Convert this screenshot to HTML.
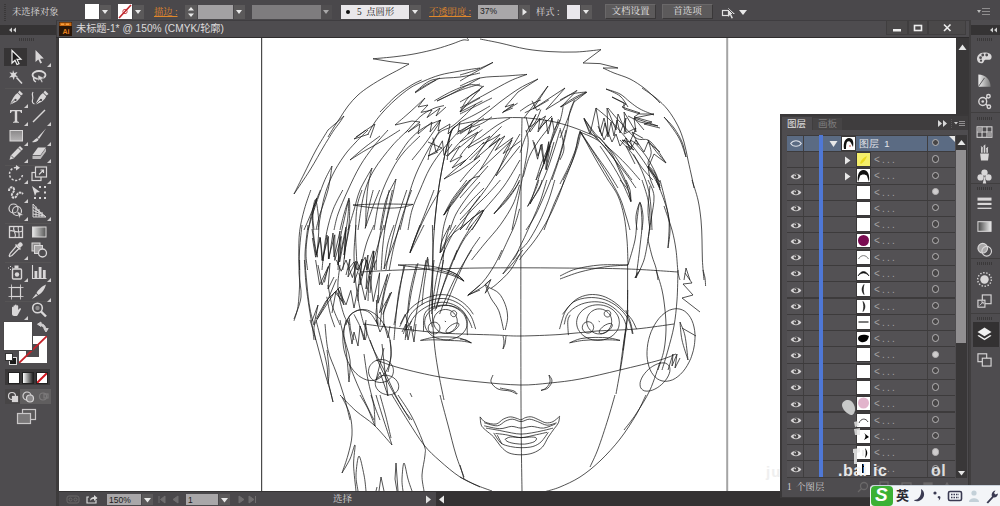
<!DOCTYPE html>
<html><head><meta charset="utf-8">
<style>
html,body{margin:0;padding:0;}
body{width:1000px;height:506px;overflow:hidden;background:#4b494c;position:relative;font-family:"Liberation Serif","Noto Serif CJK SC",serif;font-size:12px;color:#d8d6d7;}
.a{position:absolute;}
.t{position:absolute;white-space:nowrap;line-height:14px;height:14px;}
.sans{font-family:"Liberation Sans","Noto Sans CJK SC",sans-serif;}
.f{position:absolute;top:5px;height:14px;}
.dd{position:absolute;top:5px;height:14px;width:11px;background:#5b595a;}
.dd:after{content:"";position:absolute;left:2px;top:5px;border:3.5px solid transparent;border-top:4px solid #e8e8e8;border-bottom:none;}
.btn{position:absolute;top:4px;height:15px;background:#5c5a5b;border:1px solid #6a6869;border-bottom-color:#3a3839;border-right-color:#3a3839;box-sizing:border-box;text-align:center;line-height:13px;font-size:9.5px;color:#e2e0e1;}
.or{color:#e0882c;text-decoration:underline;}
.row{position:absolute;left:787px;width:168px;height:15.3px;background:#535154;}
.row i{position:absolute;top:0;height:100%;width:1px;background:#403e3f;}
.th{position:absolute;left:70px;top:1px;width:13px;height:13px;background:#fff;overflow:hidden;box-shadow:0 0 0 1px #3a3839;}
.nm{position:absolute;left:87px;top:0;font-size:10px;line-height:15px;color:#a3a1a2;letter-spacing:2.2px;font-family:"Liberation Sans",sans-serif;}
.tg{position:absolute;left:144.8px;top:3.3px;width:5.4px;height:5.4px;border:1.6px solid #b6b4b5;border-radius:50%;background:#474546;}
.tg.on{background:#cfcdce;}
</style></head><body>

<div class="a" style="left:0;top:0;width:1000px;height:25px;background:#4a484b;"></div>
<div class="a" style="left:4px;top:4px;width:2px;height:17px;background:repeating-linear-gradient(#3a3839 0 1px,#4a484b 1px 2px);"></div>
<div class="t" style="left:12px;top:5px;font-size:9.3px;color:#dddbdc;">未选择对象</div>
<div class="f" style="left:85px;width:14px;background:#fff;top:4px;height:15px;"></div><div class="dd" style="left:100px;"></div>
<div class="f" style="left:118px;width:14px;background:#fff;top:4px;height:15px;overflow:hidden;"><svg width="14" height="15" style="display:block"><line x1="1" y1="14" x2="13" y2="1" stroke="#c0262c" stroke-width="1.6"/><circle cx="7" cy="7.5" r="2.2" fill="none" stroke="#c0262c" stroke-width="0.8"/></svg></div><div class="dd" style="left:133px;"></div>
<div class="t or" style="left:154px;top:5px;font-size:9.3px;">描边 :</div>
<div class="f" style="left:185px;width:12px;background:#5b595a;"><svg width="12" height="14" style="display:block"><path d="M3 5.5 L6 2 L9 5.5Z M3 8.5 L6 12 L9 8.5Z" fill="#e8e8e8"/></svg></div>
<div class="f" style="left:198px;width:35px;background:#a3a1a3;"></div><div class="dd" style="left:234px;"></div>
<div class="f" style="left:252px;width:69px;background:#7e7c7e;"></div><div class="dd" style="left:321px;background:#555354;opacity:.6"></div>
<div class="f" style="left:341px;width:68px;background:#e9e7ea;"></div><div class="dd" style="left:410px;"></div>
<div class="a" style="left:346px;top:10px;width:4px;height:4px;border-radius:50%;background:#111;"></div>
<div class="t" style="left:357px;top:5px;font-size:9.3px;color:#222;">5 &nbsp;点圆形</div>
<div class="t or" style="left:429px;top:5px;font-size:9.3px;">不透明度 :</div>
<div class="f" style="left:478px;width:40px;background:#a9a7a9;"></div>
<div class="t sans" style="left:480px;top:4px;font-size:8.5px;color:#222;">37%</div>
<div class="f" style="left:519px;width:11px;background:#5b595a;"><svg width="11" height="14" style="display:block"><path d="M3.5 3.5 L8 7 L3.5 10.5Z" fill="#e8e8e8"/></svg></div>
<div class="t" style="left:536px;top:5px;font-size:9.3px;color:#dddbdc;">样式 :</div>
<div class="f" style="left:567px;width:13px;background:#e9e7ec;top:5px;height:14px;"></div><div class="dd" style="left:581px;"></div>
<div class="btn" style="left:605px;width:51px;">文档设置</div>
<div class="btn" style="left:662px;width:51px;">首选项</div>
<svg class="a" style="left:720px;top:4px" width="32" height="16"><rect x="2.5" y="6.5" width="6" height="5" fill="none" stroke="#e0e0e0" stroke-width="1.2"/><path d="M8 4 L15 10 L11 10 L13 14 L11.5 14.5 L10 11 L8 13Z" fill="#e0e0e0"/><path d="M6 3 L16 13" stroke="#4a484b" stroke-width="1"/><path d="M19 6 L27 6 L23 11Z" fill="#e8e8e8"/></svg>
<svg class="a" style="left:976px;top:7px" width="16" height="10"><path d="M1 3 L5 3 L3 6Z" fill="#bbb"/><path d="M6 1.5H14M6 4.5H14M6 7.5H14" stroke="#8f8d8e" stroke-width="1"/></svg>
<div class="a" style="left:0;top:25px;width:56px;height:10px;background:#353334;"></div>
<div class="a" style="left:56px;top:20px;width:914px;height:18px;background:#4e4c4f;border-top:1.5px solid #3f3d40;border-left:1px solid #3b393a;box-sizing:border-box;"></div>
<div class="a" style="left:56px;top:37px;width:914px;height:1px;background:#2e2c2d;"></div>
<svg class="a" style="left:8px;top:27px" width="10" height="6"><path d="M4 0.5 L1 3 L4 5.5Z M8 0.5 L5 3 L8 5.5Z" fill="#d0d0d0"/></svg>
<svg class="a" style="left:59px;top:22px" width="13" height="14"><rect x="0" y="0" width="13" height="14" fill="#2a1608"/><rect x="0.5" y="0.5" width="12" height="3.5" fill="#c96a14"/><rect x="2" y="1.5" width="3" height="1.5" fill="#f7a040"/><rect x="7" y="1.5" width="3" height="1.5" fill="#f7a040"/><text x="3.5" y="11.5" font-family="Liberation Sans,sans-serif" font-size="7" font-weight="bold" fill="#e8801c">Ai</text></svg>
<div class="t sans" style="left:76px;top:22px;font-size:10.2px;color:#dcdadb;">未标题-1* @ 150% (CMYK/轮廓)</div>
<svg class="a" style="left:886px;top:20px" width="82" height="16"><rect x="0.5" y="0.5" width="21" height="14" fill="#4a4849" stroke="#403e3f"/><rect x="22.5" y="0.5" width="19" height="14" fill="#4a4849" stroke="#403e3f"/><rect x="42.5" y="0.5" width="37" height="14" fill="#4a4849" stroke="#403e3f"/><rect x="7" y="9" width="8" height="2.5" fill="#eee"/><rect x="28.5" y="5.5" width="7" height="5" fill="none" stroke="#eee" stroke-width="1.6"/><path d="M58 4.5 L64.5 11 M64.5 4.5 L58 11" stroke="#eee" stroke-width="1.6"/></svg>
<div class="a" style="left:59px;top:38px;width:897px;height:453px;background:#fff;"></div>
<div class="a" style="left:0;top:35px;width:56px;height:471px;background:#4e4c4f;"></div>
<div class="a" style="left:56px;top:38px;width:3px;height:468px;background:#3d3b3c;"></div>
<div class="a" style="left:19px;top:38px;width:16px;height:3px;background:repeating-linear-gradient(90deg,#3a3839 0 1px,#4e4c4f 1px 2px);"></div>
<div class="a" style="left:4px;top:48px;width:23px;height:18px;background:#363435;"></div>
<div class="a" style="left:5px;top:87.5px;width:46px;height:1px;background:#565455;"></div>
<div class="a" style="left:5px;top:165px;width:46px;height:1px;background:#565455;"></div>
<div class="a" style="left:5px;top:222.5px;width:46px;height:1px;background:#565455;"></div>
<div class="a" style="left:5px;top:262px;width:46px;height:1px;background:#565455;"></div>
<div class="a" style="left:5px;top:301px;width:46px;height:1px;background:#565455;"></div>
<svg class="a" style="left:6.0px;top:47.0px" width="20" height="20" viewBox="0 0 20 20"><path d="M6 3.5 L6 16 L9 13.2 L11 17.5 L13 16.6 L11 12.4 L15 12.2Z" fill="#1c1a1b" stroke="#f0f0f0" stroke-width="1.2"/></svg>
<svg class="a" style="left:29.0px;top:47.0px" width="20" height="20" viewBox="0 0 20 20"><path d="M6.5 3 L6.5 15 L9.3 12.5 L11.3 16.5 L13 15.7 L11 11.8 L14.8 11.6Z" fill="#d9d7d8"/></svg>
<svg class="a" style="left:47.0px;top:63.0px" width="4" height="4"><path d="M4 0 V4 H0Z" fill="#cfcdce"/></svg>
<svg class="a" style="left:6.0px;top:67.0px" width="20" height="20" viewBox="0 0 20 20"><path d="M7 3 L8.2 6 L11.5 5 L9.6 7.8 L12 10 L8.7 9.8 L7.8 13 L6.4 10 L3 10.5 L5.5 8 L3.5 5.2 L6.5 6Z" fill="#d9d7d8"/><path d="M10.5 10.5 L16 16.5" stroke="#d9d7d8" stroke-width="1.6"/></svg>
<svg class="a" style="left:29.0px;top:67.0px" width="20" height="20" viewBox="0 0 20 20"><ellipse cx="10" cy="8" rx="6.5" ry="4" fill="none" stroke="#d9d7d8" stroke-width="1.8"/><path d="M5 10 C4 12 5 14 7 15" fill="none" stroke="#d9d7d8" stroke-width="1.3"/><path d="M9 8 L15 11 L12.5 12 L14 15 L12.5 15.5 L11 12.5 L9 14Z" fill="#d9d7d8" stroke="#4e4c4f" stroke-width="0.5"/></svg>
<svg class="a" style="left:6.0px;top:88.0px" width="20" height="20" viewBox="0 0 20 20"><path d="M13.5 2.5 L17 6 L15 7.5 L12 4.5Z" fill="#d9d7d8"/><path d="M11.5 5 L14.7 8.2 C13.5 11.5 10 14.5 4 16.5 C6 11 8.5 7 11.5 5Z M9.5 10.8 A1.1 1.1 0 1 0 9.51 10.8Z" fill="#d9d7d8" fill-rule="evenodd"/><path d="M4 16.5 L9 11.5" stroke="#4e4c4f" stroke-width="0.8"/></svg>
<svg class="a" style="left:24.0px;top:104.0px" width="4" height="4"><path d="M4 0 V4 H0Z" fill="#cfcdce"/></svg>
<svg class="a" style="left:29.0px;top:88.0px" width="20" height="20" viewBox="0 0 20 20"><g transform="translate(2.5,0)"><path d="M13.5 2.5 L17 6 L15 7.5 L12 4.5Z" fill="#d9d7d8"/><path d="M11.5 5 L14.7 8.2 C13.5 11.5 10 14.5 4 16.5 C6 11 8.5 7 11.5 5Z M9.5 10.8 A1.1 1.1 0 1 0 9.51 10.8Z" fill="#d9d7d8" fill-rule="evenodd"/><path d="M4 16.5 L9 11.5" stroke="#4e4c4f" stroke-width="0.8"/></g><path d="M4 4 C2 7 5 9 3.5 12 C3 14 4 15.5 5.5 16" fill="none" stroke="#d9d7d8" stroke-width="1.2"/></svg>
<svg class="a" style="left:6.0px;top:106.0px" width="20" height="20" viewBox="0 0 20 20"><path d="M4 4 H16 V7 H15 C14.8 5.6 14 5.2 12.5 5.2 H11.2 V14.5 C11.2 15.6 11.8 15.8 13 15.9 V16.8 H7 V15.9 C8.2 15.8 8.8 15.6 8.8 14.5 V5.2 H7.5 C6 5.2 5.2 5.6 5 7 H4Z" fill="#d9d7d8"/></svg>
<svg class="a" style="left:24.0px;top:122.0px" width="4" height="4"><path d="M4 0 V4 H0Z" fill="#cfcdce"/></svg>
<svg class="a" style="left:29.0px;top:106.0px" width="20" height="20" viewBox="0 0 20 20"><path d="M4 16 L16 4" stroke="#d9d7d8" stroke-width="1.5"/></svg>
<svg class="a" style="left:47.0px;top:122.0px" width="4" height="4"><path d="M4 0 V4 H0Z" fill="#cfcdce"/></svg>
<svg class="a" style="left:6.0px;top:125.5px" width="20" height="20" viewBox="0 0 20 20"><defs><linearGradient id="rg" x1="0" y1="0" x2="0" y2="1"><stop offset="0" stop-color="#8a8889"/><stop offset="1" stop-color="#b5b3b4"/></linearGradient></defs><rect x="4" y="4.5" width="12.5" height="10.5" fill="url(#rg)" stroke="#d9d7d8" stroke-width="1"/></svg>
<svg class="a" style="left:24.0px;top:141.5px" width="4" height="4"><path d="M4 0 V4 H0Z" fill="#cfcdce"/></svg>
<svg class="a" style="left:29.0px;top:125.5px" width="20" height="20" viewBox="0 0 20 20"><path d="M17 2.5 L8.5 11.5 L10 13Z" fill="#d9d7d8"/><path d="M8 12 L9.6 13.6 C8.5 16 5.5 16.5 3 16 C5 15 5.5 13 8 12Z" fill="#d9d7d8"/></svg>
<svg class="a" style="left:47.0px;top:141.5px" width="4" height="4"><path d="M4 0 V4 H0Z" fill="#cfcdce"/></svg>
<svg class="a" style="left:6.0px;top:143.0px" width="20" height="20" viewBox="0 0 20 20"><path d="M14 3 L17 6 L7.5 15.5 L3.5 16.8 L4.8 12.5Z" fill="#d9d7d8"/><path d="M12.3 4.8 L15.2 7.7" stroke="#4e4c4f" stroke-width="0.9"/><path d="M5 12.5 L7.5 15" stroke="#4e4c4f" stroke-width="0.9"/></svg>
<svg class="a" style="left:24.0px;top:159.0px" width="4" height="4"><path d="M4 0 V4 H0Z" fill="#cfcdce"/></svg>
<svg class="a" style="left:29.0px;top:143.0px" width="20" height="20" viewBox="0 0 20 20"><path d="M9 4.5 L17 4.5 L11.5 12 L3.5 12Z" fill="#d9d7d8"/><path d="M3.5 12.8 L11.5 12.8 L17 5.3 V8.5 L11.5 16 L3.5 16Z" fill="#bdbbbc"/></svg>
<svg class="a" style="left:47.0px;top:159.0px" width="4" height="4"><path d="M4 0 V4 H0Z" fill="#cfcdce"/></svg>
<svg class="a" style="left:6.0px;top:163.5px" width="20" height="20" viewBox="0 0 20 20"><path d="M10 3.5 A6.5 6.5 0 1 0 16.5 10" fill="none" stroke="#d9d7d8" stroke-width="1.5" stroke-dasharray="2.2 1.6"/><path d="M10 1 L14 3.8 L10 6.5Z" fill="#d9d7d8"/></svg>
<svg class="a" style="left:24.0px;top:179.5px" width="4" height="4"><path d="M4 0 V4 H0Z" fill="#cfcdce"/></svg>
<svg class="a" style="left:29.0px;top:163.5px" width="20" height="20" viewBox="0 0 20 20"><rect x="3" y="8.5" width="9" height="8" fill="none" stroke="#d9d7d8" stroke-width="1.2"/><rect x="6.5" y="3" width="11" height="10" fill="#4e4c4f" stroke="#d9d7d8" stroke-width="1.2"/><path d="M10 10.5 L14.5 6 M11.5 6 H14.5 V9" stroke="#d9d7d8" stroke-width="1.2" fill="none"/></svg>
<svg class="a" style="left:47.0px;top:179.5px" width="4" height="4"><path d="M4 0 V4 H0Z" fill="#cfcdce"/></svg>
<svg class="a" style="left:6.0px;top:182.5px" width="20" height="20" viewBox="0 0 20 20"><path d="M3 8 C3 4 7 3 8 6 C9 9 5 10 6 13 C7 16 10 15 11 12 C12 9 15 9 17 11" fill="none" stroke="#d9d7d8" stroke-width="2" stroke-dasharray="2.5 0.7"/></svg>
<svg class="a" style="left:24.0px;top:198.5px" width="4" height="4"><path d="M4 0 V4 H0Z" fill="#cfcdce"/></svg>
<svg class="a" style="left:29.0px;top:182.5px" width="20" height="20" viewBox="0 0 20 20"><path d="M3 3 L11 9 L7.5 9.5 L6 13Z" fill="#d9d7d8"/><g fill="#d9d7d8"><rect x="10" y="3" width="2" height="2"/><rect x="15" y="3" width="2" height="2"/><rect x="15" y="8.5" width="2" height="2"/><rect x="15" y="14" width="2" height="2"/><rect x="10" y="14" width="2" height="2"/><rect x="5" y="14" width="2" height="2"/></g></svg>
<svg class="a" style="left:6.0px;top:201.0px" width="20" height="20" viewBox="0 0 20 20"><circle cx="7.5" cy="7.5" r="4.5" fill="none" stroke="#d9d7d8" stroke-width="1.2"/><circle cx="11" cy="10" r="4.5" fill="none" stroke="#d9d7d8" stroke-width="1.2"/><path d="M10.5 9.5 L17.5 14 L14.5 14.6 L13.5 17.5Z" fill="#d9d7d8" stroke="#4e4c4f" stroke-width="0.5"/></svg>
<svg class="a" style="left:24.0px;top:217.0px" width="4" height="4"><path d="M4 0 V4 H0Z" fill="#cfcdce"/></svg>
<svg class="a" style="left:29.0px;top:201.0px" width="20" height="20" viewBox="0 0 20 20"><path d="M4 3 L4 16 L17 16 L10 10Z" fill="none" stroke="#d9d7d8" stroke-width="1"/><path d="M4 6 L12 12 M4 9.5 L14 13.7 M4 13 L16 15 M7 5.5 V16 M10 8 V16 M13 11 V16" stroke="#d9d7d8" stroke-width="1"/></svg>
<svg class="a" style="left:47.0px;top:217.0px" width="4" height="4"><path d="M4 0 V4 H0Z" fill="#cfcdce"/></svg>
<svg class="a" style="left:6.0px;top:221.5px" width="20" height="20" viewBox="0 0 20 20"><rect x="3.5" y="4.5" width="13" height="11" fill="none" stroke="#d9d7d8" stroke-width="1.3"/><path d="M3.5 9 C7 7 9 12 16.5 9 M8 4.5 C6 8 11 11 9 15.5 M12.5 4.5 C11 8 14 10 13 15.5" fill="none" stroke="#d9d7d8" stroke-width="1.1"/></svg>
<svg class="a" style="left:29.0px;top:221.5px" width="20" height="20" viewBox="0 0 20 20"><defs><linearGradient id="gg" x1="0" y1="0" x2="1" y2="0"><stop offset="0" stop-color="#e8e8e8"/><stop offset="1" stop-color="#555"/></linearGradient></defs><rect x="3.5" y="5" width="13.5" height="10" fill="url(#gg)" stroke="#d9d7d8" stroke-width="1"/></svg>
<svg class="a" style="left:6.0px;top:239.5px" width="20" height="20" viewBox="0 0 20 20"><path d="M13.5 2.5 C15 1.5 17.5 4 16.5 5.5 L14 8 L11 5Z" fill="#d9d7d8"/><path d="M10.5 6 L13 8.5 L6 15.5 L3.5 16.5 L3.2 15.8 L4.2 13.3Z" fill="none" stroke="#d9d7d8" stroke-width="1.2"/><path d="M9.5 4.5 L14.5 9.5" stroke="#d9d7d8" stroke-width="1.5"/></svg>
<svg class="a" style="left:24.0px;top:255.5px" width="4" height="4"><path d="M4 0 V4 H0Z" fill="#cfcdce"/></svg>
<svg class="a" style="left:29.0px;top:239.5px" width="20" height="20" viewBox="0 0 20 20"><rect x="3" y="3" width="8" height="8" fill="#8d8b8c" stroke="#d9d7d8" stroke-width="1"/><rect x="5.5" y="5.5" width="8" height="8" fill="#a5a3a4" stroke="#d9d7d8" stroke-width="1"/><circle cx="13.5" cy="13" r="4" fill="#4e4c4f" stroke="#d9d7d8" stroke-width="1.3"/></svg>
<svg class="a" style="left:6.0px;top:261.5px" width="20" height="20" viewBox="0 0 20 20"><rect x="6.5" y="7" width="9" height="10" rx="1" fill="none" stroke="#d9d7d8" stroke-width="1.4"/><circle cx="11" cy="12.5" r="2.2" fill="#d9d7d8"/><rect x="8.5" y="3.5" width="4" height="3" fill="#d9d7d8"/><path d="M2 6 h1 M4 4.5 h1 M4 7.5 h1 M6 6 h1" stroke="#d9d7d8" stroke-width="1"/></svg>
<svg class="a" style="left:24.0px;top:277.5px" width="4" height="4"><path d="M4 0 V4 H0Z" fill="#cfcdce"/></svg>
<svg class="a" style="left:29.0px;top:261.5px" width="20" height="20" viewBox="0 0 20 20"><path d="M3.5 3 V16.5 H17.5" fill="none" stroke="#d9d7d8" stroke-width="1.1"/><rect x="5.5" y="9" width="2.8" height="7" fill="#d9d7d8"/><rect x="9.7" y="5" width="2.8" height="11" fill="#d9d7d8"/><rect x="13.9" y="8" width="2.8" height="8" fill="#d9d7d8"/></svg>
<svg class="a" style="left:47.0px;top:277.5px" width="4" height="4"><path d="M4 0 V4 H0Z" fill="#cfcdce"/></svg>
<svg class="a" style="left:6.0px;top:281.5px" width="20" height="20" viewBox="0 0 20 20"><rect x="5.5" y="5.5" width="9" height="9" fill="none" stroke="#d9d7d8" stroke-width="1.2"/><path d="M2.5 5.5 H17.5 M2.5 14.5 H17.5 M5.5 2.5 V17.5 M14.5 2.5 V17.5" stroke="#d9d7d8" stroke-width="0.8"/></svg>
<svg class="a" style="left:29.0px;top:281.5px" width="20" height="20" viewBox="0 0 20 20"><path d="M17 2.5 C13 4 9 8 7.5 11 L9.5 13 C13 11 16 7 17 2.5Z" fill="#d9d7d8"/><path d="M7 11.8 L8.8 13.6 L3 17Z" fill="#d9d7d8"/></svg>
<svg class="a" style="left:47.0px;top:297.5px" width="4" height="4"><path d="M4 0 V4 H0Z" fill="#cfcdce"/></svg>
<svg class="a" style="left:6.0px;top:299.5px" width="20" height="20" viewBox="0 0 20 20"><path d="M5 9 V5.5 C5 4.5 6.5 4.5 6.5 5.5 V4 C6.5 3 8 3 8 4 V3.3 C8 2.3 9.6 2.3 9.6 3.3 V4 C9.6 3 11.2 3 11.2 4 V8 L12.5 6.5 C13.3 5.7 14.5 6.5 13.8 7.5 L11 12.5 C10.5 13.5 10 14 9 14 H7 C6 14 5 13 5 12Z" fill="#d9d7d8" transform="translate(1,2)"/></svg>
<svg class="a" style="left:24.0px;top:315.5px" width="4" height="4"><path d="M4 0 V4 H0Z" fill="#cfcdce"/></svg>
<svg class="a" style="left:29.0px;top:299.5px" width="20" height="20" viewBox="0 0 20 20"><circle cx="8.5" cy="8" r="4.8" fill="none" stroke="#d9d7d8" stroke-width="1.6"/><circle cx="8.5" cy="8" r="2.2" fill="#8d8b8c"/><path d="M12 11.5 L17 16.5" stroke="#d9d7d8" stroke-width="2.4"/></svg>
<div class="a" style="left:19px;top:336px;width:28px;height:27px;background:#fff;"></div>
<div class="a" style="left:26px;top:344px;width:13px;height:13px;background:#4e4c4f;"></div>
<svg class="a" style="left:19px;top:336px" width="28" height="27"><path d="M0 27 L28 0" stroke="#c4222a" stroke-width="1.8"/></svg>
<div class="a" style="left:4px;top:322px;width:28px;height:28px;background:#fff;box-shadow:0 0 0 1px #4a4849;"></div>
<svg class="a" style="left:36px;top:320px" width="14" height="14"><path d="M3 4 C7 3 10 6 10 10 M1.5 4.2 L5 2 V6.5Z M10 12 L7.8 8.5 H12.2Z" fill="#cfcdce" stroke="#cfcdce" stroke-width="1" /></svg>
<div class="a" style="left:9px;top:357px;width:6px;height:6px;background:#1a1a1a;border:1px solid #ddd;"></div><div class="a" style="left:5px;top:353px;width:6px;height:6px;background:#fff;border:1px solid #333;"></div>
<div class="a" style="left:5px;top:369px;width:45px;height:16px;background:#3a3839;"></div>
<div class="a" style="left:8px;top:372px;width:10px;height:10px;background:#fff;border:1px solid #222;"></div>
<div class="a" style="left:22px;top:372px;width:10px;height:10px;background:linear-gradient(90deg,#fff,#222);border:1px solid #222;"></div>
<div class="a" style="left:36px;top:372px;width:10px;height:10px;background:#fff;border:1px solid #222;overflow:hidden"><svg width="10" height="10" style="display:block"><path d="M0 10 L10 0" stroke="#d01820" stroke-width="2"/></svg></div>
<div class="a" style="left:5px;top:389px;width:46px;height:15px;background:#605e5f;"></div>
<div class="a" style="left:5px;top:389px;width:15px;height:15px;background:#474546;"></div>
<svg class="a" style="left:5px;top:389px" width="46" height="15"><g fill="none" stroke="#d6d4d5" stroke-width="1.2"><circle cx="7" cy="7" r="3.5"/><rect x="7.500" y="7.500" width="5" height="5" fill="#d6d4d5"/><circle cx="22" cy="7" r="4"/><circle cx="25" cy="9.500" r="3.500" fill="#8a8889"/></g><g fill="none" stroke="#7c7a7b" stroke-width="1.2"><circle cx="38" cy="7.500" r="3.500"/><rect x="39" y="5" width="4" height="4"/></g></svg>
<svg class="a" style="left:16px;top:408px" width="22" height="18"><rect x="6.500" y="1.500" width="13" height="10" fill="#5a5859" stroke="#c9c7c8" stroke-width="1.200"/><rect x="1.500" y="5.500" width="13" height="10" fill="#7a7879" stroke="#c9c7c8" stroke-width="1.200"/></svg>
<div class="a" style="left:956px;top:38px;width:13px;height:453px;background:#393738;"></div>
<svg class="a" style="left:956px;top:42px" width="13" height="10"><path d="M2.5 8 L6.5 2.5 L10.5 8Z" fill="#e6e6e6"/></svg>
<div class="a" style="left:969px;top:20px;width:31px;height:486px;background:#4e4c4f;"></div>
<div class="a" style="left:969px;top:20px;width:2px;height:486px;background:#403e3f;"></div>
<div class="a" style="left:971px;top:25px;width:29px;height:10px;background:#353334;"></div>
<svg class="a" style="left:989px;top:27px" width="10" height="6"><path d="M4 0.5 L1 3 L4 5.5Z M8 0.5 L5 3 L8 5.5Z" fill="#d0d0d0"/></svg>
<div class="a" style="left:977px;top:38px;width:15px;height:3px;background:repeating-linear-gradient(90deg,#3a3839 0 1px,#4e4c4f 1px 2px);"></div>
<div class="a" style="left:977px;top:117px;width:15px;height:3px;background:repeating-linear-gradient(90deg,#3a3839 0 1px,#4e4c4f 1px 2px);"></div>
<div class="a" style="left:977px;top:187px;width:15px;height:3px;background:repeating-linear-gradient(90deg,#3a3839 0 1px,#4e4c4f 1px 2px);"></div>
<div class="a" style="left:977px;top:262px;width:15px;height:3px;background:repeating-linear-gradient(90deg,#3a3839 0 1px,#4e4c4f 1px 2px);"></div>
<div class="a" style="left:977px;top:317px;width:15px;height:3px;background:repeating-linear-gradient(90deg,#3a3839 0 1px,#4e4c4f 1px 2px);"></div>
<div class="a" style="left:971px;top:112px;width:29px;height:1px;background:#403e3f;"></div>
<div class="a" style="left:971px;top:183px;width:29px;height:1px;background:#403e3f;"></div>
<div class="a" style="left:971px;top:258px;width:29px;height:1px;background:#403e3f;"></div>
<div class="a" style="left:971px;top:313px;width:29px;height:1px;background:#403e3f;"></div>
<svg class="a" style="left:974px;top:48px" width="21" height="21" viewBox="0 0 24 24"><path d="M12 5 C6 5 3 9 3.500 13 C4 17 8 18 10 17 C12 16 11 14 13 13.500 C15 13 19 15 20 11 C21 7 17 5 12 5Z" fill="#d9d7d8"/><circle cx="7.500" cy="11" r="1.600" fill="#4e4c4f"/><circle cx="10" cy="8" r="1.600" fill="#4e4c4f"/><circle cx="14.500" cy="8" r="1.600" fill="#4e4c4f"/><circle cx="8" cy="14.500" r="1.300" fill="#4e4c4f"/></svg>
<svg class="a" style="left:974px;top:70px" width="21" height="21" viewBox="0 0 24 24"><defs><linearGradient id="cg" x1="0" y1="0" x2="1" y2="0"><stop offset="0" stop-color="#f0f0f0"/><stop offset="1" stop-color="#777"/></linearGradient></defs><path d="M5 19 V5 C13 5 19 11 19 19Z" fill="url(#cg)"/><path d="M5 19 L12 9" stroke="#4e4c4f" stroke-width="1"/></svg>
<svg class="a" style="left:974px;top:91px" width="21" height="21" viewBox="0 0 24 24"><g fill="none" stroke="#d9d7d8" stroke-width="1.600"><circle cx="10" cy="12" r="4.500"/><circle cx="16.500" cy="6" r="2"/><circle cx="17" cy="18" r="2"/><path d="M13.500 9 L15 7.500 M13.500 15 L15.500 16.800"/></g><circle cx="10" cy="12" r="1.500" fill="#d9d7d8"/></svg>
<svg class="a" style="left:974px;top:122px" width="21" height="21" viewBox="0 0 24 24"><rect x="3.500" y="5.500" width="17" height="12" fill="none" stroke="#d9d7d8" stroke-width="1.200"/><path d="M3.500 11.500 H20.500 M9.200 5.500 V17.500 M14.800 5.500 V17.500" stroke="#d9d7d8" stroke-width="1.200"/><rect x="4" y="6" width="5" height="5" fill="#9a9899"/><rect x="15" y="12" width="5" height="5" fill="#9a9899"/></svg>
<svg class="a" style="left:974px;top:143px" width="21" height="21" viewBox="0 0 24 24"><path d="M7 12 H17 L16 20 H8Z" fill="#d9d7d8"/><path d="M9 11 V5 M12 11 V3 M15 11 V6" stroke="#d9d7d8" stroke-width="1.800"/><path d="M8 4 l2 2 M13 2 l-2 2 M16 5 l-2 2" stroke="#d9d7d8" stroke-width="1.200"/></svg>
<svg class="a" style="left:974px;top:166px" width="21" height="21" viewBox="0 0 24 24"><circle cx="12" cy="7.500" r="3.600" fill="#d9d7d8"/><circle cx="7.500" cy="13" r="3.600" fill="#d9d7d8"/><circle cx="16.500" cy="13" r="3.600" fill="#d9d7d8"/><path d="M12 11 L10 20 H14Z" fill="#d9d7d8"/></svg>
<svg class="a" style="left:974px;top:193px" width="21" height="21" viewBox="0 0 24 24"><path d="M4 7 H20" stroke="#d9d7d8" stroke-width="3.500"/><path d="M4 12.500 H20" stroke="#d9d7d8" stroke-width="2.500"/><path d="M4 17.500 H20" stroke="#d9d7d8" stroke-width="1.500"/></svg>
<svg class="a" style="left:974px;top:216px" width="21" height="21" viewBox="0 0 24 24"><defs><linearGradient id="g2" x1="0" y1="0" x2="1" y2="0"><stop offset="0" stop-color="#444"/><stop offset="1" stop-color="#eee"/></linearGradient></defs><rect x="4.500" y="6.500" width="15" height="11" fill="url(#g2)" stroke="#d9d7d8" stroke-width="1.200"/></svg>
<svg class="a" style="left:974px;top:239px" width="21" height="21" viewBox="0 0 24 24"><circle cx="10" cy="10.500" r="5.500" fill="#a9a7a8" stroke="#d9d7d8" stroke-width="1.300"/><circle cx="14.500" cy="14" r="5.500" fill="none" stroke="#d9d7d8" stroke-width="1.300"/></svg>
<svg class="a" style="left:974px;top:269px" width="21" height="21" viewBox="0 0 24 24"><circle cx="12" cy="12" r="4.800" fill="#d9d7d8"/><circle cx="12" cy="12" r="7.800" fill="none" stroke="#d9d7d8" stroke-width="1.600" stroke-dasharray="1.600 1.900"/></svg>
<svg class="a" style="left:974px;top:291px" width="21" height="21" viewBox="0 0 24 24"><rect x="9.500" y="4.500" width="10" height="10" fill="none" stroke="#d9d7d8" stroke-width="1.300"/><rect x="4.500" y="10.500" width="8" height="8" fill="#4e4c4f" stroke="#d9d7d8" stroke-width="1.300"/><path d="M6.500 16.500 L10.500 12.500 M8 12.500 H10.500 V15" stroke="#d9d7d8" stroke-width="1" fill="none"/></svg>
<div class="a" style="left:973px;top:322px;width:26px;height:25px;background:#333132;"></div>
<svg class="a" style="left:974px;top:324px" width="21" height="21" viewBox="0 0 24 24"><path d="M12 4 L20 9 L12 14 L4 9Z" fill="#f0f0f0"/><path d="M5.500 12.500 L12 16.500 L18.500 12.500 L20 13.500 L12 18.500 L4 13.500Z" fill="#f0f0f0"/></svg>
<svg class="a" style="left:974px;top:349px" width="21" height="21" viewBox="0 0 24 24"><rect x="4.500" y="5.500" width="10" height="9" fill="none" stroke="#d9d7d8" stroke-width="1.300"/><rect x="9.500" y="10.500" width="10" height="9" fill="#4e4c4f" stroke="#d9d7d8" stroke-width="1.300"/></svg>
<div class="a" style="left:59px;top:491px;width:910px;height:15px;background:#4a484b;"></div>
<div class="a" style="left:59px;top:491px;width:910px;height:1px;background:#353334;"></div>
<div class="a" style="left:436px;top:492px;width:533px;height:14px;background:#343233;"></div>
<div class="a" style="left:878px;top:493px;width:24px;height:13px;background:#8d8b8d;"></div>
<div class="a" style="left:107px;top:494px;width:34px;height:11px;background:#a9a7a9;"></div>
<div class="t sans" style="left:109px;top:493px;font-size:8.5px;color:#1c1c1c;">150%</div>
<div class="a" style="left:142px;top:494px;width:11px;height:11px;background:#5b595a;"></div><svg class="a" style="left:142px;top:494px" width="11" height="11"><path d="M2 4 L9 4 L5.5 8.5Z" fill="#e8e8e8"/></svg>
<div class="a" style="left:186px;top:494px;width:32px;height:11px;background:#a9a7a9;"></div>
<div class="t sans" style="left:188px;top:493px;font-size:8.5px;color:#1c1c1c;">1</div>
<div class="a" style="left:219px;top:494px;width:11px;height:11px;background:#5b595a;"></div><svg class="a" style="left:219px;top:494px" width="11" height="11"><path d="M2 4 L9 4 L5.5 8.5Z" fill="#e8e8e8"/></svg>
<svg class="a" style="left:59px;top:492px" width="400" height="14"><g fill="#6f6d6e"><path d="M100 4 V11 M101.5 7.5 L106 4 V11Z M114 7.5 L119 4 V11Z" stroke="#6f6d6e"/><path d="M180 4 L185 7.5 L180 11Z M190 4 L195 7.5 L190 11Z M196.5 4 V11" stroke="#6f6d6e"/></g><g stroke="#6a6869" fill="none"><rect x="8" y="4" width="12" height="7" rx="2"/><circle cx="11.5" cy="7.5" r="1.5"/><circle cx="16.5" cy="7.5" r="1.5"/></g><path d="M30 5 H28 V11 H37 V8" stroke="#d8d8d8" fill="none" stroke-width="1.2"/><path d="M31 9 C31 6 33 5 35 5 V3 L38.5 6 L35 9 V7 C33.5 7 32 7.5 31 9Z" fill="#d8d8d8"/><path d="M367 3.5 L372 7.5 L367 11.5Z" fill="#e0e0e0"/><path d="M385 3.5 L380 7.5 L385 11.5Z" fill="#e8e8e8"/></svg>
<div class="t" style="left:333px;top:492px;font-size:9.5px;color:#d8d6d7;">选择</div>
<div class="a" style="left:780px;top:114px;width:189px;height:384px;background:#3a3839;"></div>
<div class="a" style="left:782px;top:116px;width:186px;height:14px;background:#3f3d3e;"></div>
<div class="a" style="left:782px;top:117px;width:30px;height:14px;background:#4e4c4f;"></div>
<div class="a" style="left:813px;top:118px;width:29px;height:12px;background:#464445;"></div>
<div class="a" style="left:782px;top:130px;width:186px;height:367px;background:#4e4c4f;"></div>
<div class="t sans" style="left:787px;top:117px;font-size:9.5px;color:#e4e2e3;">图层</div>
<div class="t sans" style="left:818px;top:117px;font-size:9.5px;color:#7d7b7c;">画板</div>
<svg class="a" style="left:935px;top:118px" width="32" height="12"><path d="M3 2 L7 5.5 L3 9Z M8 2 L12 5.5 L8 9Z" fill="#d8d8d8"/><path d="M16.5 1 V10" stroke="#5a5859" stroke-dasharray="1 1"/><path d="M19 4 L23 4 L21 6.5Z" fill="#ccc"/><path d="M24 3.5H30M24 5.5H30M24 7.5H30" stroke="#8f8d8e" stroke-width="1"/></svg>
<div class="a" style="left:787px;top:135px;width:168px;height:343px;background:#3d3b3c;"></div>
<div class="row" style="top:135.7px;background:#5b6b83;"><i style="left:16px"></i><b class="a" style="left:32px;top:-1px;width:4px;height:17px;background:#4f78d6;"></b><i style="left:140px"></i><svg class="a" style="left:3px;top:3.5px" width="12" height="9"><path d="M0.7 4.5 C3 0.8 9 0.8 11.3 4.5 C9 8.2 3 8.2 0.7 4.5Z" fill="none" stroke="#dcdfe6" stroke-width="1.1"/></svg><svg class="a" style="left:42px;top:4px" width="9" height="8"><path d="M0.5 1 L8.5 1 L4.5 7Z" fill="#e8e8e8"/></svg><div class="th" style="left:55px;"><svg width="13" height="13"><path d="M2 12 C1 6 3 1 7 1 C11 1 12 5 11 10 L9 6 C8 4 6 4 5 5 C4 7 4 10 4 12Z" fill="#111"/><circle cx="8" cy="9" r="1" fill="#d88"/></svg></div><div class="nm" style="left:72px;color:#e2e4ea;font-size:9.5px;letter-spacing:0;">图层 &nbsp;1</div><svg class="a" style="left:162px;top:0" width="6" height="6"><path d="M0 0 H6 V6Z" fill="#e8e8e8"/></svg><div class="tg"></div></div>
<div class="row" style="top:152.0px;background:#535154;"><i style="left:16px"></i><b class="a" style="left:32px;top:-1px;width:4px;height:17px;background:#4f78d6;"></b><i style="left:140px"></i><svg class="a" style="left:57px;top:3.5px" width="7" height="9"><path d="M1 0.5 L6.5 4.5 L1 8.5Z" fill="#e8e8e8"/></svg><div class="th"><svg width="13" height="13"><rect width="13" height="13" fill="#f4ee6a"/><path d="M3 10 C5 6 7 4 10 3 C9 6 7 9 4 11Z" fill="#e8d820"/></svg></div><div class="nm">&lt;...</div><div class="tg"></div></div>
<div class="row" style="top:168.3px;background:#535154;"><i style="left:16px"></i><b class="a" style="left:32px;top:-1px;width:4px;height:17px;background:#4f78d6;"></b><i style="left:140px"></i><svg class="a" style="left:3px;top:3.5px" width="12" height="9"><path d="M0.7 4.5 C3 0.8 9 0.8 11.3 4.5 C9 8.2 3 8.2 0.7 4.5Z" fill="#d6d4d5"/><circle cx="6" cy="4.3" r="2.3" fill="#4a4849"/><circle cx="5.2" cy="3.6" r="0.8" fill="#d6d4d5"/></svg><svg class="a" style="left:57px;top:3.5px" width="7" height="9"><path d="M1 0.5 L6.5 4.5 L1 8.5Z" fill="#e8e8e8"/></svg><div class="th"><svg width="13" height="13"><path d="M1 13 C0 6 2 1 6.5 1 C11 1 13 6 12 13 L10 7 C9 5 4 5 3 7Z" fill="#111"/></svg></div><div class="nm">&lt;...</div><div class="tg"></div></div>
<div class="row" style="top:184.5px;background:#535154;"><i style="left:16px"></i><b class="a" style="left:32px;top:-1px;width:4px;height:17px;background:#4f78d6;"></b><i style="left:140px"></i><svg class="a" style="left:3px;top:3.5px" width="12" height="9"><path d="M0.7 4.5 C3 0.8 9 0.8 11.3 4.5 C9 8.2 3 8.2 0.7 4.5Z" fill="#d6d4d5"/><circle cx="6" cy="4.3" r="2.3" fill="#4a4849"/><circle cx="5.2" cy="3.6" r="0.8" fill="#d6d4d5"/></svg><div class="th"></div><div class="nm">&lt;...</div><div class="tg on"></div></div>
<div class="row" style="top:200.8px;background:#535154;"><i style="left:16px"></i><b class="a" style="left:32px;top:-1px;width:4px;height:17px;background:#4f78d6;"></b><i style="left:140px"></i><svg class="a" style="left:3px;top:3.5px" width="12" height="9"><path d="M0.7 4.5 C3 0.8 9 0.8 11.3 4.5 C9 8.2 3 8.2 0.7 4.5Z" fill="#d6d4d5"/><circle cx="6" cy="4.3" r="2.3" fill="#4a4849"/><circle cx="5.2" cy="3.6" r="0.8" fill="#d6d4d5"/></svg><div class="th"></div><div class="nm">&lt;...</div><div class="tg"></div></div>
<div class="row" style="top:217.1px;background:#535154;"><i style="left:16px"></i><b class="a" style="left:32px;top:-1px;width:4px;height:17px;background:#4f78d6;"></b><i style="left:140px"></i><svg class="a" style="left:3px;top:3.5px" width="12" height="9"><path d="M0.7 4.5 C3 0.8 9 0.8 11.3 4.5 C9 8.2 3 8.2 0.7 4.5Z" fill="#d6d4d5"/><circle cx="6" cy="4.3" r="2.3" fill="#4a4849"/><circle cx="5.2" cy="3.6" r="0.8" fill="#d6d4d5"/></svg><div class="th"></div><div class="nm">&lt;...</div><div class="tg"></div></div>
<div class="row" style="top:233.4px;background:#535154;"><i style="left:16px"></i><b class="a" style="left:32px;top:-1px;width:4px;height:17px;background:#4f78d6;"></b><i style="left:140px"></i><svg class="a" style="left:3px;top:3.5px" width="12" height="9"><path d="M0.7 4.5 C3 0.8 9 0.8 11.3 4.5 C9 8.2 3 8.2 0.7 4.5Z" fill="#d6d4d5"/><circle cx="6" cy="4.3" r="2.3" fill="#4a4849"/><circle cx="5.2" cy="3.6" r="0.8" fill="#d6d4d5"/></svg><div class="th"><svg width="13" height="13"><circle cx="6.5" cy="6.5" r="5.5" fill="#7a0b52"/></svg></div><div class="nm">&lt;...</div><div class="tg"></div></div>
<div class="row" style="top:249.7px;background:#535154;"><i style="left:16px"></i><b class="a" style="left:32px;top:-1px;width:4px;height:17px;background:#4f78d6;"></b><i style="left:140px"></i><svg class="a" style="left:3px;top:3.5px" width="12" height="9"><path d="M0.7 4.5 C3 0.8 9 0.8 11.3 4.5 C9 8.2 3 8.2 0.7 4.5Z" fill="#d6d4d5"/><circle cx="6" cy="4.3" r="2.3" fill="#4a4849"/><circle cx="5.2" cy="3.6" r="0.8" fill="#d6d4d5"/></svg><div class="th"><svg width="13" height="13"><path d="M1.5 8 C4 3.5 9 3.5 11.5 8" stroke="#555" fill="none" stroke-width="0.8"/></svg></div><div class="nm">&lt;...</div><div class="tg"></div></div>
<div class="row" style="top:265.9px;background:#535154;"><i style="left:16px"></i><b class="a" style="left:32px;top:-1px;width:4px;height:17px;background:#4f78d6;"></b><i style="left:140px"></i><svg class="a" style="left:3px;top:3.5px" width="12" height="9"><path d="M0.7 4.5 C3 0.8 9 0.8 11.3 4.5 C9 8.2 3 8.2 0.7 4.5Z" fill="#d6d4d5"/><circle cx="6" cy="4.3" r="2.3" fill="#4a4849"/><circle cx="5.2" cy="3.6" r="0.8" fill="#d6d4d5"/></svg><div class="th"><svg width="13" height="13"><path d="M1 9 C4 3 9 3 12 9 C9 5 4 5 1 9Z" fill="#111" stroke="#111" stroke-width="0.6"/></svg></div><div class="nm">&lt;...</div><div class="tg"></div></div>
<div class="row" style="top:282.2px;background:#535154;"><i style="left:16px"></i><b class="a" style="left:32px;top:-1px;width:4px;height:17px;background:#4f78d6;"></b><i style="left:140px"></i><svg class="a" style="left:3px;top:3.5px" width="12" height="9"><path d="M0.7 4.5 C3 0.8 9 0.8 11.3 4.5 C9 8.2 3 8.2 0.7 4.5Z" fill="#d6d4d5"/><circle cx="6" cy="4.3" r="2.3" fill="#4a4849"/><circle cx="5.2" cy="3.6" r="0.8" fill="#d6d4d5"/></svg><div class="th"><svg width="13" height="13"><path d="M7 1.5 C4.5 4.5 4.5 8.5 7 11.5 C6 8 6 5 7 1.5Z" fill="#111" stroke="#111" stroke-width="0.6"/></svg></div><div class="nm">&lt;...</div><div class="tg"></div></div>
<div class="row" style="top:298.5px;background:#535154;"><i style="left:16px"></i><b class="a" style="left:32px;top:-1px;width:4px;height:17px;background:#4f78d6;"></b><i style="left:140px"></i><svg class="a" style="left:3px;top:3.5px" width="12" height="9"><path d="M0.7 4.5 C3 0.8 9 0.8 11.3 4.5 C9 8.2 3 8.2 0.7 4.5Z" fill="#d6d4d5"/><circle cx="6" cy="4.3" r="2.3" fill="#4a4849"/><circle cx="5.2" cy="3.6" r="0.8" fill="#d6d4d5"/></svg><div class="th"><svg width="13" height="13"><path d="M6 1.5 C8.5 4.5 8.5 8.5 6 11.5 C7 8 7 5 6 1.5Z" fill="#111" stroke="#111" stroke-width="0.6"/></svg></div><div class="nm">&lt;...</div><div class="tg"></div></div>
<div class="row" style="top:314.8px;background:#535154;"><i style="left:16px"></i><b class="a" style="left:32px;top:-1px;width:4px;height:17px;background:#4f78d6;"></b><i style="left:140px"></i><svg class="a" style="left:3px;top:3.5px" width="12" height="9"><path d="M0.7 4.5 C3 0.8 9 0.8 11.3 4.5 C9 8.2 3 8.2 0.7 4.5Z" fill="#d6d4d5"/><circle cx="6" cy="4.3" r="2.3" fill="#4a4849"/><circle cx="5.2" cy="3.6" r="0.8" fill="#d6d4d5"/></svg><div class="th"><svg width="13" height="13"><path d="M1.5 6 H11.5" stroke="#222" stroke-width="1.2"/></svg></div><div class="nm">&lt;...</div><div class="tg"></div></div>
<div class="row" style="top:331.1px;background:#535154;"><i style="left:16px"></i><b class="a" style="left:32px;top:-1px;width:4px;height:17px;background:#4f78d6;"></b><i style="left:140px"></i><svg class="a" style="left:3px;top:3.5px" width="12" height="9"><path d="M0.7 4.5 C3 0.8 9 0.8 11.3 4.5 C9 8.2 3 8.2 0.7 4.5Z" fill="#d6d4d5"/><circle cx="6" cy="4.3" r="2.3" fill="#4a4849"/><circle cx="5.2" cy="3.6" r="0.8" fill="#d6d4d5"/></svg><div class="th"><svg width="13" height="13"><path d="M1 6 C2 2 8 2 12 4 C11 9 8 11 4 10 C2 9 1 8 1 6Z" fill="#000"/></svg></div><div class="nm">&lt;...</div><div class="tg"></div></div>
<div class="row" style="top:347.3px;background:#535154;"><i style="left:16px"></i><b class="a" style="left:32px;top:-1px;width:4px;height:17px;background:#4f78d6;"></b><i style="left:140px"></i><svg class="a" style="left:3px;top:3.5px" width="12" height="9"><path d="M0.7 4.5 C3 0.8 9 0.8 11.3 4.5 C9 8.2 3 8.2 0.7 4.5Z" fill="#d6d4d5"/><circle cx="6" cy="4.3" r="2.3" fill="#4a4849"/><circle cx="5.2" cy="3.6" r="0.8" fill="#d6d4d5"/></svg><div class="th"></div><div class="nm">&lt;...</div><div class="tg on"></div></div>
<div class="row" style="top:363.6px;background:#535154;"><i style="left:16px"></i><b class="a" style="left:32px;top:-1px;width:4px;height:17px;background:#4f78d6;"></b><i style="left:140px"></i><svg class="a" style="left:3px;top:3.5px" width="12" height="9"><path d="M0.7 4.5 C3 0.8 9 0.8 11.3 4.5 C9 8.2 3 8.2 0.7 4.5Z" fill="#d6d4d5"/><circle cx="6" cy="4.3" r="2.3" fill="#4a4849"/><circle cx="5.2" cy="3.6" r="0.8" fill="#d6d4d5"/></svg><div class="th"></div><div class="nm">&lt;...</div><div class="tg"></div></div>
<div class="row" style="top:379.9px;background:#535154;"><i style="left:16px"></i><b class="a" style="left:32px;top:-1px;width:4px;height:17px;background:#4f78d6;"></b><i style="left:140px"></i><svg class="a" style="left:3px;top:3.5px" width="12" height="9"><path d="M0.7 4.5 C3 0.8 9 0.8 11.3 4.5 C9 8.2 3 8.2 0.7 4.5Z" fill="#d6d4d5"/><circle cx="6" cy="4.3" r="2.3" fill="#4a4849"/><circle cx="5.2" cy="3.6" r="0.8" fill="#d6d4d5"/></svg><div class="th"></div><div class="nm">&lt;...</div><div class="tg"></div></div>
<div class="row" style="top:396.2px;background:#535154;"><i style="left:16px"></i><b class="a" style="left:32px;top:-1px;width:4px;height:17px;background:#4f78d6;"></b><i style="left:140px"></i><svg class="a" style="left:3px;top:3.5px" width="12" height="9"><path d="M0.7 4.5 C3 0.8 9 0.8 11.3 4.5 C9 8.2 3 8.2 0.7 4.5Z" fill="#d6d4d5"/><circle cx="6" cy="4.3" r="2.3" fill="#4a4849"/><circle cx="5.2" cy="3.6" r="0.8" fill="#d6d4d5"/></svg><div class="th"><svg width="13" height="13"><circle cx="6.5" cy="6" r="5.5" fill="#e2b4cc"/></svg></div><div class="nm">&lt;...</div><div class="tg"></div></div>
<div class="row" style="top:412.5px;background:#535154;"><i style="left:16px"></i><b class="a" style="left:32px;top:-1px;width:4px;height:17px;background:#4f78d6;"></b><i style="left:140px"></i><svg class="a" style="left:3px;top:3.5px" width="12" height="9"><path d="M0.7 4.5 C3 0.8 9 0.8 11.3 4.5 C9 8.2 3 8.2 0.7 4.5Z" fill="#d6d4d5"/><circle cx="6" cy="4.3" r="2.3" fill="#4a4849"/><circle cx="5.2" cy="3.6" r="0.8" fill="#d6d4d5"/></svg><div class="th"><svg width="13" height="13"><path d="M2 9 C4 4 9 4 11 8" stroke="#333" fill="none" stroke-width="0.9"/></svg></div><div class="nm">&lt;...</div><div class="tg"></div></div>
<div class="row" style="top:428.7px;background:#535154;"><i style="left:16px"></i><b class="a" style="left:32px;top:-1px;width:4px;height:17px;background:#4f78d6;"></b><i style="left:140px"></i><svg class="a" style="left:3px;top:3.5px" width="12" height="9"><path d="M0.7 4.5 C3 0.8 9 0.8 11.3 4.5 C9 8.2 3 8.2 0.7 4.5Z" fill="#d6d4d5"/><circle cx="6" cy="4.3" r="2.3" fill="#4a4849"/><circle cx="5.2" cy="3.6" r="0.8" fill="#d6d4d5"/></svg><div class="th"><svg width="13" height="13"><path d="M7 3 L12 7 L7 10 C9 7 9 5 7 3Z" fill="#000"/></svg></div><div class="nm">&lt;...</div><div class="tg"></div></div>
<div class="row" style="top:445.0px;background:#535154;"><i style="left:16px"></i><b class="a" style="left:32px;top:-1px;width:4px;height:17px;background:#4f78d6;"></b><i style="left:140px"></i><svg class="a" style="left:3px;top:3.5px" width="12" height="9"><path d="M0.7 4.5 C3 0.8 9 0.8 11.3 4.5 C9 8.2 3 8.2 0.7 4.5Z" fill="#d6d4d5"/><circle cx="6" cy="4.3" r="2.3" fill="#4a4849"/><circle cx="5.2" cy="3.6" r="0.8" fill="#d6d4d5"/></svg><div class="th"><svg width="13" height="13"><path d="M8 2 C11 5 11 9 8 12 C9 8 9 5 8 2Z" fill="#000"/></svg></div><div class="nm">&lt;...</div><div class="tg on"></div></div>
<div class="row" style="top:461.3px;background:#535154;"><i style="left:16px"></i><b class="a" style="left:32px;top:-1px;width:4px;height:17px;background:#4f78d6;"></b><i style="left:140px"></i><svg class="a" style="left:3px;top:3.5px" width="12" height="9"><path d="M0.7 4.5 C3 0.8 9 0.8 11.3 4.5 C9 8.2 3 8.2 0.7 4.5Z" fill="#d6d4d5"/><circle cx="6" cy="4.3" r="2.3" fill="#4a4849"/><circle cx="5.2" cy="3.6" r="0.8" fill="#d6d4d5"/></svg><div class="th"><svg width="13" height="13"><path d="M6 2 V11" stroke="#000" stroke-width="2"/></svg></div><div class="nm">&lt;...</div><div class="tg"></div></div>
<div class="a" style="left:956px;top:135px;width:11px;height:343px;background:#393738;"></div>
<div class="a" style="left:956px;top:150px;width:10px;height:193px;background:#918f91;"></div>
<svg class="a" style="left:956px;top:137px" width="11" height="10"><path d="M1.5 8 L5.5 3 L9.5 8Z" fill="#e6e6e6"/></svg>
<svg class="a" style="left:956px;top:468px" width="11" height="10"><path d="M2 3 L9 3 L5.5 7.5Z" fill="#e6e6e6"/></svg>
<div class="t" style="left:787px;top:480px;font-size:9.3px;color:#d2d0d1;">1 &nbsp;个图层</div>
<svg class="a" style="left:850px;top:478px" width="110" height="18" fill="none" stroke="#6a6869" stroke-width="1.3"><circle cx="14" cy="8" r="3.5"/><path d="M11.5 10.5 L8 14"/><rect x="30" y="4" width="8" height="9"/><rect x="52" y="5" width="9" height="8"/><rect x="74" y="5" width="8" height="8" fill="#6a6869"/><path d="M93 12 L97 5 L101 12Z" fill="#6a6869"/></svg>
<svg class="a" style="left:0;top:0" width="1000" height="506" viewBox="0 0 1000 506">
<defs><clipPath id="cv"><rect x="59" y="38" width="897" height="453"/></clipPath></defs>
<g clip-path="url(#cv)" fill="none" stroke="#1a1a1a" stroke-width="0.75" stroke-linejoin="miter" stroke-miterlimit="10">
<path d="M261.6 38V491" stroke="#4a4a4a" stroke-width="1.2"/><path d="M727.2 38V491" stroke="#a4a4a4" stroke-width="2"/>
<path d="M467.0 38.0C467.2 38.4 469.1 40.1 468.4 40.4C467.7 40.7 465.7 39.4 463.0 40.0C460.3 40.6 456.5 42.5 452.0 44.0C447.5 45.5 442.0 47.4 436.0 49.0C430.0 50.6 422.7 52.3 416.0 53.6C409.3 54.9 403.2 55.7 396.0 56.6C388.8 57.5 376.8 58.4 373.0 58.8M373.0 58.8L390.0 61.6L409.0 64.0M409.0 64.0C407.5 64.8 404.0 66.8 400.0 69.0C396.0 71.2 390.0 74.2 385.0 77.0C380.0 79.8 374.5 83.0 370.0 86.0C365.5 89.0 361.7 91.7 358.0 95.0C354.3 98.3 351.0 102.2 348.0 106.0C345.0 109.8 342.3 114.5 340.0 118.0C337.7 121.5 336.0 123.8 334.0 127.0C332.0 130.2 329.0 135.3 328.0 137.0M480.0 68.0C476.7 68.5 466.7 69.8 460.0 71.0C453.3 72.2 446.0 73.3 440.0 75.0C434.0 76.7 429.0 78.8 424.0 81.0C419.0 83.2 414.8 84.8 410.0 88.0C405.2 91.2 399.5 96.0 395.0 100.0C390.5 104.0 386.3 108.3 383.0 112.0C379.7 115.7 377.5 118.3 375.0 122.0C372.5 125.7 369.2 132.0 368.0 134.0M480.0 73.0C476.7 73.7 468.0 75.8 460.0 77.0C452.0 78.2 439.5 77.4 432.0 80.0C424.5 82.6 417.8 90.3 415.0 92.4M415.0 92.4C416.8 91.2 421.8 87.4 426.0 85.0C430.2 82.6 437.7 79.2 440.0 78.0M480.0 78.0C475.8 80.3 462.2 88.2 455.0 92.0C447.8 95.8 440.0 99.5 437.0 101.0M437.0 101.0C440.8 99.2 452.8 93.2 460.0 90.4C467.2 87.6 476.7 85.1 480.0 84.0M425.0 98.0L418.0 107.0L428.0 105.0L421.0 112.4L432.0 110.0L427.0 117.6L440.0 108.0L436.0 116.0L446.0 107.0M425.0 98.0C422.5 100.3 415.0 107.5 410.0 112.0C405.0 116.5 397.5 122.8 395.0 125.0M395.0 125.0L412.0 121.0L420.0 122.0L408.0 132.0M408.0 132.0L420.0 124.0L418.0 134.0L432.0 122.0L430.0 132.0L440.0 120.0L438.0 131.0L450.0 124.0L448.0 134.0L460.0 122.0L458.0 132.0L472.0 124.0L468.0 134.0L480.0 126.0"/>
<path d="M480.0 90.0C478.0 91.3 471.3 94.3 468.0 98.0C464.7 101.7 461.3 109.7 460.0 112.0M480.0 98.0C477.7 99.3 469.3 103.7 466.0 106.0C462.7 108.3 461.0 111.0 460.0 112.0M356.0 137.0L375.0 124.0L370.0 138.0M480.0 39.0C483.3 39.7 492.3 41.3 500.0 43.0C507.7 44.7 517.7 47.6 526.0 49.0C534.3 50.4 541.7 51.1 550.0 51.6C558.3 52.1 567.5 52.3 576.0 52.0C584.5 51.7 596.8 50.0 601.0 49.6M601.0 49.6L583.0 63.0L600.0 63.6L618.0 68.0L603.0 68.0M603.0 68.0C604.8 68.8 609.5 71.2 614.0 73.0C618.5 74.8 625.0 76.5 630.0 79.0C635.0 81.5 640.0 85.0 644.0 88.0C648.0 91.0 651.3 94.5 654.0 97.0C656.7 99.5 659.0 102.0 660.0 103.0M460.0 75.0C462.7 74.2 470.5 72.1 476.0 70.0C481.5 67.9 490.2 63.7 493.0 62.4M493.0 62.4C489.5 64.3 477.5 70.9 472.0 74.0C466.5 77.1 462.0 79.8 460.0 81.0M460.0 86.0C463.3 84.7 472.3 79.7 480.0 78.0C487.7 76.3 498.2 76.6 506.0 76.0C513.8 75.4 523.5 74.7 527.0 74.4M527.0 74.4C524.2 75.5 516.8 77.7 510.0 81.0C503.2 84.3 494.3 89.5 486.0 94.0C477.7 98.5 464.3 105.7 460.0 108.0M538.0 79.0C535.0 80.5 526.3 84.2 520.0 88.0C513.7 91.8 506.7 97.0 500.0 102.0C493.3 107.0 486.7 113.0 480.0 118.0C473.3 123.0 463.3 129.7 460.0 132.0M484.0 86.0C481.7 87.7 474.0 93.3 470.0 96.0C466.0 98.7 461.7 101.0 460.0 102.0"/>
<path d="M538.0 79.0L518.0 92.0L505.0 107.0L514.0 104.0L502.0 113.0M548.0 86.0L533.0 109.0L565.0 88.0L546.0 109.6L577.0 90.4L561.0 107.0L587.0 92.0L574.0 102.0M574.0 102.0C573.0 104.7 570.3 112.0 568.0 118.0C565.7 124.0 561.3 134.7 560.0 138.0M548.0 86.0C546.0 88.7 540.0 96.7 536.0 102.0C532.0 107.3 526.0 115.3 524.0 118.0M460.0 124.0C465.0 123.2 480.0 120.1 490.0 119.0C500.0 117.9 510.0 117.3 520.0 117.6C530.0 117.9 541.3 119.4 550.0 121.0C558.7 122.6 565.3 124.8 572.0 127.0C578.7 129.2 585.3 132.2 590.0 134.0C594.7 135.8 598.3 137.3 600.0 138.0M526.0 117.0L530.0 132.0L540.0 118.0L538.0 132.0L546.0 120.0L548.0 134.0L552.0 118.0L554.0 130.0L560.0 120.0M606.0 89.0C608.3 89.8 616.0 91.8 620.0 94.0C624.0 96.2 626.7 99.5 630.0 102.0C633.3 104.5 636.0 106.8 640.0 109.0C644.0 111.2 651.7 114.0 654.0 115.0M612.0 97.0L626.0 104.0L622.0 107.0L640.0 113.0L634.0 117.0L652.0 122.0L644.0 124.0L660.0 128.0M584.0 119.0L590.0 134.0L596.0 108.0L600.0 132.0L604.0 118.0L608.0 134.0L607.0 108.0L616.0 130.0L618.0 114.0L626.0 132.0L624.0 112.0L636.0 132.0L634.0 118.0L644.0 130.0M460.0 114.0C463.3 112.3 474.7 106.7 480.0 104.0C485.3 101.3 490.0 99.0 492.0 98.0M460.0 122.0C462.7 120.7 471.0 116.7 476.0 114.0C481.0 111.3 487.7 107.3 490.0 106.0M460.0 134.0C462.0 132.7 468.0 128.7 472.0 126.0C476.0 123.3 482.0 119.3 484.0 118.0"/>
<path d="M480.0 138.0C482.7 136.0 491.0 129.3 496.0 126.0C501.0 122.7 507.7 119.3 510.0 118.0M642.0 88.0C644.3 89.7 651.7 94.3 656.0 98.0C660.3 101.7 664.3 105.3 668.0 110.0C671.7 114.7 675.3 120.7 678.0 126.0C680.7 131.3 682.3 136.3 684.0 142.0C685.7 147.7 686.7 154.0 688.0 160.0C689.3 166.0 691.0 173.3 692.0 178.0C693.0 182.7 693.7 186.3 694.0 188.0M664.0 117.0C665.7 118.8 671.0 123.8 674.0 128.0C677.0 132.2 680.0 137.2 682.0 142.0C684.0 146.8 685.3 154.5 686.0 157.0M686.0 157.0C685.0 154.2 682.5 145.2 680.0 140.0C677.5 134.8 673.7 129.8 671.0 126.0C668.3 122.2 665.2 118.5 664.0 117.0M606.0 89.0C608.3 90.2 616.3 93.0 620.0 96.0C623.7 99.0 626.7 105.2 628.0 107.0M612.0 97.0L624.0 103.0L624.0 109.0L640.0 114.0L654.0 114.0L634.0 118.0L658.0 126.0L640.0 122.0L628.0 116.0M596.0 108.0C598.3 110.0 605.0 115.0 610.0 120.0C615.0 125.0 621.0 132.0 626.0 138.0C631.0 144.0 635.7 150.0 640.0 156.0C644.3 162.0 648.7 168.7 652.0 174.0C655.3 179.3 658.7 185.7 660.0 188.0M584.0 118.0C585.7 120.7 589.7 128.0 594.0 134.0C598.3 140.0 604.7 147.3 610.0 154.0C615.3 160.7 621.7 168.3 626.0 174.0C630.3 179.7 634.3 185.7 636.0 188.0M580.0 131.0C582.3 134.5 589.3 145.2 594.0 152.0C598.7 158.8 604.0 166.0 608.0 172.0C612.0 178.0 616.3 185.3 618.0 188.0M608.0 108.0C610.0 110.3 615.3 117.0 620.0 122.0C624.7 127.0 631.3 135.0 636.0 138.0C640.7 141.0 644.7 138.3 648.0 140.0C651.3 141.7 653.0 144.2 656.0 148.0C659.0 151.8 664.3 160.5 666.0 163.0M666.0 163.0L654.0 154.0L648.0 168.0L660.0 182.0M598.0 126.0L602.0 136.0L605.0 123.0L608.0 137.0L611.0 122.0L614.0 136.0L617.0 120.0L620.0 133.0L626.0 118.0L624.0 134.0L636.0 128.0L630.0 142.0L622.0 140.0L634.0 150.0L626.0 146.0L635.0 164.0"/>
<path d="M560.0 100.0C562.0 99.0 567.7 95.3 572.0 94.0C576.3 92.7 583.7 92.3 586.0 92.0M560.0 107.0C562.3 105.5 569.7 100.5 574.0 98.0C578.3 95.5 584.0 93.0 586.0 92.0M580.0 131.0C579.3 133.8 578.0 141.8 576.0 148.0C574.0 154.2 570.7 162.0 568.0 168.0C565.3 174.0 561.3 181.3 560.0 184.0M560.0 128.0C560.7 131.3 564.0 142.7 564.0 148.0C564.0 153.3 560.7 158.0 560.0 160.0M648.0 166.0C649.0 167.3 652.0 170.3 654.0 174.0C656.0 177.7 659.0 185.7 660.0 188.0M648.0 166.0C648.3 168.0 649.0 174.3 650.0 178.0C651.0 181.7 653.3 186.3 654.0 188.0M600.0 138.0C602.0 140.7 608.7 148.3 612.0 154.0C615.3 159.7 617.3 166.3 620.0 172.0C622.7 177.7 626.7 185.3 628.0 188.0M328.0 130.0C326.0 133.3 320.0 142.7 316.0 150.0C312.0 157.3 307.7 166.7 304.0 174.0C300.3 181.3 295.7 190.7 294.0 194.0M294.0 194.0C296.7 190.0 305.0 178.0 310.0 170.0C315.0 162.0 320.0 152.7 324.0 146.0C328.0 139.3 332.3 132.7 334.0 130.0M332.0 166.0C330.7 168.7 327.0 174.7 324.0 182.0C321.0 189.3 316.7 202.0 314.0 210.0C311.3 218.0 309.0 226.7 308.0 230.0M332.0 166.0C331.3 170.0 330.0 182.0 328.0 190.0C326.0 198.0 322.0 207.3 320.0 214.0C318.0 220.7 316.7 227.3 316.0 230.0M368.0 130.0C366.0 132.0 360.0 137.7 356.0 142.0C352.0 146.3 348.0 150.3 344.0 156.0C340.0 161.7 335.3 169.0 332.0 176.0C328.7 183.0 326.3 189.0 324.0 198.0C321.7 207.0 319.0 224.7 318.0 230.0"/>
<path d="M380.0 136.0C377.3 138.0 369.0 144.0 364.0 148.0C359.0 152.0 352.3 158.0 350.0 160.0M350.0 160.0C352.7 158.3 360.3 153.3 366.0 150.0C371.7 146.7 378.3 143.3 384.0 140.0C389.7 136.7 397.3 131.7 400.0 130.0M366.0 130.0L354.0 139.0L369.0 134.0M408.0 130.0C405.3 132.7 397.7 139.3 392.0 146.0C386.3 152.7 378.7 162.0 374.0 170.0C369.3 178.0 366.7 184.0 364.0 194.0C361.3 204.0 359.0 224.0 358.0 230.0M372.0 168.0C370.0 171.7 363.0 183.0 360.0 190.0C357.0 197.0 356.0 203.3 354.0 210.0C352.0 216.7 349.0 226.7 348.0 230.0M372.0 168.0C371.3 171.0 369.0 179.0 368.0 186.0C367.0 193.0 366.3 203.3 366.0 210.0C365.7 216.7 366.0 223.3 366.0 226.0M420.0 136.0C417.3 138.7 408.7 146.3 404.0 152.0C399.3 157.7 396.0 162.3 392.0 170.0C388.0 177.7 383.0 188.0 380.0 198.0C377.0 208.0 375.0 224.7 374.0 230.0M396.0 179.0C394.3 182.5 388.7 191.5 386.0 200.0C383.3 208.5 381.0 225.0 380.0 230.0M396.0 179.0C395.3 182.2 394.0 189.5 392.0 198.0C390.0 206.5 385.3 224.7 384.0 230.0M440.0 130.0C438.0 133.3 432.0 142.7 428.0 150.0C424.0 157.3 419.3 166.0 416.0 174.0C412.7 182.0 410.7 188.7 408.0 198.0C405.3 207.3 401.3 224.7 400.0 230.0M428.0 142.0L442.0 148.0L428.0 156.0L438.0 152.0M452.0 130.0C451.0 133.3 448.0 141.7 446.0 150.0C444.0 158.3 441.7 170.0 440.0 180.0C438.3 190.0 437.0 201.7 436.0 210.0C435.0 218.3 434.3 226.7 434.0 230.0"/>
<path d="M446.0 156.0L460.0 146.0L450.0 162.0L462.0 156.0L452.0 168.0L466.0 160.0L444.0 179.0L460.0 170.0L472.0 162.0L480.0 156.0M353.0 205.0C357.5 204.8 370.0 204.1 380.0 204.0C390.0 203.9 407.5 204.3 413.0 204.4M353.0 205.0C356.8 205.5 368.2 207.6 376.0 208.0C383.8 208.4 393.8 208.2 400.0 207.6C406.2 207.0 410.8 204.9 413.0 204.4M480.0 170.0C477.7 172.7 470.3 180.7 466.0 186.0C461.7 191.3 457.7 197.2 454.0 202.0C450.3 206.8 445.7 212.8 444.0 215.0M444.0 215.0C446.0 211.8 451.7 201.8 456.0 196.0C460.3 190.2 466.0 183.3 470.0 180.0C474.0 176.7 478.3 176.7 480.0 176.0M480.0 182.0C478.0 184.3 472.0 190.7 468.0 196.0C464.0 201.3 459.0 208.3 456.0 214.0C453.0 219.7 451.0 227.3 450.0 230.0M480.0 196.0C478.3 198.3 473.3 204.3 470.0 210.0C466.7 215.7 461.7 226.7 460.0 230.0M480.0 210.0C478.7 211.7 474.3 216.7 472.0 220.0C469.7 223.3 467.0 228.3 466.0 230.0M317.0 198.0C316.3 200.7 313.5 208.7 313.0 214.0C312.5 219.3 313.8 227.3 314.0 230.0M317.0 198.0C315.8 201.0 312.2 210.7 310.0 216.0C307.8 221.3 305.0 227.7 304.0 230.0M349.0 198.0C348.2 200.7 345.5 208.7 344.0 214.0C342.5 219.3 340.7 227.3 340.0 230.0M349.0 198.0C348.8 201.0 348.5 210.7 348.0 216.0C347.5 221.3 346.3 227.7 346.0 230.0"/>
<path d="M388.0 130.0C385.7 132.7 378.7 140.0 374.0 146.0C369.3 152.0 364.3 158.7 360.0 166.0C355.7 173.3 351.7 182.0 348.0 190.0C344.3 198.0 340.3 207.3 338.0 214.0C335.7 220.7 334.7 227.3 334.0 230.0M460.0 130.0C457.3 133.0 449.0 141.7 444.0 148.0C439.0 154.3 434.0 161.0 430.0 168.0C426.0 175.0 423.0 183.0 420.0 190.0C417.0 197.0 414.0 203.3 412.0 210.0C410.0 216.7 408.7 226.7 408.0 230.0M472.0 130.0C470.0 132.0 464.0 137.7 460.0 142.0C456.0 146.3 450.0 153.7 448.0 156.0M480.0 138.0C478.0 139.3 471.3 143.0 468.0 146.0C464.7 149.0 461.3 154.3 460.0 156.0M460.0 142.0L478.0 132.0L468.0 148.0L490.0 136.0L474.0 160.0L500.0 138.0L480.0 170.0L512.0 140.0L496.0 176.0L520.0 146.0M520.0 134.0C518.0 137.3 512.7 146.3 508.0 154.0C503.3 161.7 497.3 172.0 492.0 180.0C486.7 188.0 481.3 195.3 476.0 202.0C470.7 208.7 462.7 217.0 460.0 220.0M520.0 160.0C517.3 164.3 510.0 177.7 504.0 186.0C498.0 194.3 490.0 202.7 484.0 210.0C478.0 217.3 470.7 226.7 468.0 230.0M520.0 174.0C518.7 176.7 516.3 183.3 512.0 190.0C507.7 196.7 497.0 210.0 494.0 214.0M460.0 166.0C462.0 164.0 468.0 158.0 472.0 154.0C476.0 150.0 482.0 144.0 484.0 142.0M460.0 182.0C461.7 180.0 466.7 173.7 470.0 170.0C473.3 166.3 478.3 161.7 480.0 160.0M460.0 198.0C462.3 195.3 469.3 187.3 474.0 182.0C478.7 176.7 485.7 168.7 488.0 166.0M460.0 214.0C462.0 211.7 468.0 204.3 472.0 200.0C476.0 195.7 482.0 190.0 484.0 188.0"/>
<path d="M460.0 230.0L472.0 218.0L484.0 210.0L472.0 230.0M526.0 130.0C526.3 132.7 529.0 136.0 528.0 146.0C527.0 156.0 522.7 176.0 520.0 190.0C517.3 204.0 513.3 223.3 512.0 230.0M554.0 130.0C553.0 133.3 550.3 142.7 548.0 150.0C545.7 157.3 543.0 165.0 540.0 174.0C537.0 183.0 531.7 199.0 530.0 204.0M530.0 204.0C532.3 199.7 540.0 187.0 544.0 178.0C548.0 169.0 551.3 158.0 554.0 150.0C556.7 142.0 559.0 133.3 560.0 130.0M566.0 130.0C565.0 134.0 562.7 145.3 560.0 154.0C557.3 162.7 554.0 172.0 550.0 182.0C546.0 192.0 540.0 206.0 536.0 214.0C532.0 222.0 527.7 227.3 526.0 230.0M580.0 132.0C579.7 133.0 579.0 134.0 578.0 138.0C577.0 142.0 576.3 148.7 574.0 156.0C571.7 163.3 567.3 174.0 564.0 182.0C560.7 190.0 557.3 196.0 554.0 204.0C550.7 212.0 545.7 225.7 544.0 230.0M534.0 142.0L538.0 156.0L542.0 144.0L544.0 162.0L550.0 146.0L546.0 170.0L554.0 142.0M580.0 132.0C582.0 135.0 587.3 142.7 592.0 150.0C596.7 157.3 603.3 168.0 608.0 176.0C612.7 184.0 617.0 191.3 620.0 198.0C623.0 204.7 624.3 210.7 626.0 216.0C627.7 221.3 629.3 227.7 630.0 230.0M580.0 132.0C583.3 133.7 594.0 137.0 600.0 142.0C606.0 147.0 611.7 155.3 616.0 162.0C620.3 168.7 623.5 175.3 626.0 182.0C628.5 188.7 630.2 198.7 631.0 202.0M631.0 202.0C629.2 198.0 623.8 185.3 620.0 178.0C616.2 170.7 611.3 163.3 608.0 158.0C604.7 152.7 601.3 148.0 600.0 146.0M620.0 140.0C622.3 142.7 630.0 150.0 634.0 156.0C638.0 162.0 641.3 169.0 644.0 176.0C646.7 183.0 648.7 189.0 650.0 198.0C651.3 207.0 651.7 224.7 652.0 230.0M634.0 142.0C636.0 144.3 642.3 150.7 646.0 156.0C649.7 161.3 653.7 169.0 656.0 174.0C658.3 179.0 659.3 184.0 660.0 186.0"/>
<path d="M637.0 230.0C636.8 227.7 635.5 220.5 636.0 216.0C636.5 211.5 638.8 203.0 640.0 203.0C641.2 203.0 642.7 211.5 643.0 216.0C643.3 220.5 642.2 227.7 642.0 230.0M648.0 166.0C649.7 168.7 656.0 178.0 658.0 182.0C660.0 186.0 659.7 188.7 660.0 190.0M650.0 186.0C649.7 190.0 648.0 202.7 648.0 210.0C648.0 217.3 649.7 226.7 650.0 230.0M600.0 130.0L604.0 140.0L608.0 132.0L612.0 142.0L616.0 134.0L620.0 146.0L626.0 138.0L630.0 150.0L636.0 140.0L644.0 152.0L648.0 142.0L660.0 152.0M692.0 180.0C693.0 183.3 696.5 193.3 698.0 200.0C699.5 206.7 700.3 213.3 701.0 220.0C701.7 226.7 701.8 233.3 702.0 240.0C702.2 246.7 702.1 253.3 702.4 260.0C702.7 266.7 703.7 276.7 704.0 280.0M608.0 180.0C609.7 182.7 615.3 190.0 618.0 196.0C620.7 202.0 622.5 208.7 624.0 216.0C625.5 223.3 626.3 232.0 627.0 240.0C627.7 248.0 627.8 260.0 628.0 264.0M620.0 180.0C621.3 181.7 626.2 186.5 628.0 190.0C629.8 193.5 630.5 199.2 631.0 201.0M626.0 180.0C626.7 181.7 629.2 186.5 630.0 190.0C630.8 193.5 630.8 199.2 631.0 201.0M628.0 265.0C629.2 260.8 633.5 247.5 635.0 240.0C636.5 232.5 636.2 226.3 637.0 220.0C637.8 213.7 639.2 201.3 640.0 202.0C640.8 202.7 642.0 216.7 642.0 224.0C642.0 231.3 641.0 237.0 640.0 246.0C639.0 255.0 636.7 272.7 636.0 278.0M642.0 180.0C643.0 183.3 646.7 193.3 648.0 200.0C649.3 206.7 650.0 213.3 650.0 220.0C650.0 226.7 648.3 236.7 648.0 240.0M648.0 180.0C649.0 182.7 653.5 189.3 654.0 196.0C654.5 202.7 652.0 212.7 651.0 220.0C650.0 227.3 648.5 236.7 648.0 240.0M656.0 180.0C657.3 183.3 661.8 193.3 664.0 200.0C666.2 206.7 668.3 212.0 669.0 220.0C669.7 228.0 668.2 243.3 668.0 248.0"/>
<path d="M668.0 248.0C668.3 244.7 670.3 235.3 670.0 228.0C669.7 220.7 667.7 212.0 666.0 204.0C664.3 196.0 661.0 184.0 660.0 180.0M648.0 240.0C648.7 242.7 650.7 251.3 652.0 256.0C653.3 260.7 655.0 264.0 656.0 268.0C657.0 272.0 657.7 278.0 658.0 280.0M648.0 240.0C647.3 243.3 646.0 253.7 644.0 260.0C642.0 266.3 637.3 275.0 636.0 278.0M664.0 206.0C665.3 210.0 670.0 222.7 672.0 230.0C674.0 237.3 675.0 243.0 676.0 250.0C677.0 257.0 677.3 267.0 678.0 272.0C678.7 277.0 679.7 278.7 680.0 280.0M684.0 280.0L686.0 268.0L690.0 280.0M560.0 279.0C563.3 277.8 572.7 274.0 580.0 272.0C587.3 270.0 596.0 268.2 604.0 267.0C612.0 265.8 624.0 265.3 628.0 265.0M628.0 265.0C623.3 265.0 608.7 264.3 600.0 265.0C591.3 265.7 582.7 267.2 576.0 269.0C569.3 270.8 562.7 274.8 560.0 276.0M302.0 225.0C301.6 229.0 300.1 241.0 299.6 249.0C299.1 257.0 298.8 265.0 299.0 273.0C299.2 281.0 301.8 289.3 301.0 297.0C300.2 304.7 295.2 315.3 294.0 319.0M308.0 225.0C307.5 230.0 305.2 245.0 305.0 255.0C304.8 265.0 306.2 276.0 307.0 285.0C307.8 294.0 308.8 302.3 310.0 309.0C311.2 315.7 313.3 322.3 314.0 325.0M312.0 229.0L316.0 255.0L320.0 237.0L323.0 261.0L327.0 235.0L329.0 259.0L333.0 233.0L334.0 257.0L340.0 231.0L338.0 265.0L346.0 227.0L344.0 255.0L350.0 225.0M318.0 265.0L322.0 285.0L330.0 263.0L328.0 289.0L334.0 277.0M346.0 275.0L350.0 259.0L348.0 277.0L356.0 261.0L354.0 283.0L362.0 259.0L360.0 285.0L368.0 255.0L366.0 289.0L374.0 251.0L370.0 293.0"/>
<path d="M316.0 319.0L326.0 301.0L340.0 287.0L344.0 305.0L336.0 291.0L332.0 313.0M314.0 325.0L318.0 305.0L312.0 321.0M356.0 225.0C355.7 230.0 354.0 245.0 354.0 255.0C354.0 265.0 355.0 276.0 356.0 285.0C357.0 294.0 358.7 302.3 360.0 309.0C361.3 315.7 363.3 322.3 364.0 325.0M374.0 225.0C372.7 228.3 368.3 237.0 366.0 245.0C363.7 253.0 361.3 263.7 360.0 273.0C358.7 282.3 358.3 296.3 358.0 301.0M384.0 225.0C383.0 228.3 380.3 236.7 378.0 245.0C375.7 253.3 371.7 265.7 370.0 275.0C368.3 284.3 368.3 296.7 368.0 301.0M394.0 225.0C393.0 228.0 389.7 235.7 388.0 243.0C386.3 250.3 384.7 264.7 384.0 269.0M384.0 269.0C386.0 263.7 393.3 244.3 396.0 237.0C398.7 229.7 399.3 227.0 400.0 225.0M420.0 225.0C419.0 227.7 415.7 236.3 414.0 241.0C412.3 245.7 410.7 251.0 410.0 253.0M410.0 253.0C411.3 250.3 415.7 241.7 418.0 237.0C420.3 232.3 423.0 227.0 424.0 225.0M432.4 225.0C432.5 231.7 433.1 251.0 433.0 265.0C432.9 279.0 432.2 301.7 432.0 309.0M450.0 225.0C448.7 227.7 443.7 236.3 442.0 241.0C440.3 245.7 440.3 251.0 440.0 253.0M440.0 253.0C441.3 250.3 445.3 241.7 448.0 237.0C450.7 232.3 454.7 227.0 456.0 225.0"/>
<path d="M472.0 225.0C470.0 228.3 463.7 237.7 460.0 245.0C456.3 252.3 453.3 260.7 450.0 269.0C446.7 277.3 442.3 288.3 440.0 295.0C437.7 301.7 436.7 306.7 436.0 309.0M480.0 237.0C478.0 240.0 472.0 247.7 468.0 255.0C464.0 262.3 459.7 272.7 456.0 281.0C452.3 289.3 447.7 301.0 446.0 305.0M398.0 265.0C401.7 265.0 413.0 264.5 420.0 265.0C427.0 265.5 434.0 266.5 440.0 268.0C446.0 269.5 452.0 271.8 456.0 274.0C460.0 276.2 462.7 279.8 464.0 281.0M398.0 265.0C401.7 265.5 413.0 266.8 420.0 268.0C427.0 269.2 434.3 270.7 440.0 272.0C445.7 273.3 450.0 274.5 454.0 276.0C458.0 277.5 462.3 280.2 464.0 281.0M404.0 265.0C403.3 269.0 401.3 281.0 400.0 289.0C398.7 297.0 397.0 307.0 396.0 313.0C395.0 319.0 394.3 323.0 394.0 325.0M418.0 263.0C417.0 267.3 413.7 280.7 412.0 289.0C410.3 297.3 408.7 309.0 408.0 313.0M428.0 259.0C427.3 263.3 425.0 277.3 424.0 285.0C423.0 292.7 422.3 301.7 422.0 305.0M390.0 273.0C389.0 276.7 385.7 286.3 384.0 295.0C382.3 303.7 380.7 320.0 380.0 325.0M390.0 293.0C389.0 296.0 385.0 305.7 384.0 311.0C383.0 316.3 384.0 322.7 384.0 325.0M378.0 295.0C377.7 298.3 376.0 310.0 376.0 315.0C376.0 320.0 377.7 323.3 378.0 325.0M346.0 325.0C346.7 323.3 347.7 317.5 350.0 315.0C352.3 312.5 356.7 310.3 360.0 310.0C363.3 309.7 367.0 310.5 370.0 313.0C373.0 315.5 376.7 323.0 378.0 325.0M468.0 295.0 L480.0 285.0"/>
<path d="M468.0 295.0 L480.0 290.0M328.0 285.0C328.7 288.3 330.0 298.3 332.0 305.0C334.0 311.7 338.7 321.7 340.0 325.0M340.0 265.0C339.7 269.0 337.3 280.7 338.0 289.0C338.7 297.3 342.0 309.0 344.0 315.0C346.0 321.0 349.0 323.3 350.0 325.0M310.0 320.0C311.0 323.3 313.7 331.7 316.0 340.0C318.3 348.3 321.7 361.7 324.0 370.0C326.3 378.3 328.5 384.7 330.0 390.0C331.5 395.3 332.5 400.0 333.0 402.0M316.0 320.0C317.0 324.0 320.2 336.3 322.0 344.0C323.8 351.7 326.0 360.0 327.0 366.0C328.0 372.0 327.0 374.0 328.0 380.0C329.0 386.0 332.2 398.3 333.0 402.0M325.0 324.0C325.5 328.3 326.2 342.0 328.0 350.0C329.8 358.0 333.3 364.3 336.0 372.0C338.7 379.7 341.7 388.0 344.0 396.0C346.3 404.0 349.0 416.0 350.0 420.0M327.0 350.0C327.3 353.3 328.8 364.3 329.0 370.0C329.2 375.7 328.2 381.7 328.0 384.0M340.0 320.0C341.0 325.0 344.5 339.7 346.0 350.0C347.5 360.3 348.5 376.7 349.0 382.0M349.0 382.0C349.2 378.3 350.8 367.7 350.0 360.0C349.2 352.3 344.7 342.7 344.0 336.0C343.3 329.3 345.7 322.7 346.0 320.0M349.0 364.0C350.5 367.7 354.8 378.7 358.0 386.0C361.2 393.3 365.3 402.3 368.0 408.0C370.7 413.7 373.0 418.0 374.0 420.0M364.0 354.0C364.7 358.3 366.3 371.7 368.0 380.0C369.7 388.3 372.0 397.3 374.0 404.0C376.0 410.7 379.0 417.3 380.0 420.0M348.0 320.0L352.0 344.0L354.0 332.0L358.0 346.0L360.0 326.0L364.0 340.0L366.0 320.0"/>
<path d="M364.0 324.0C365.3 327.7 368.7 338.3 372.0 346.0C375.3 353.7 380.0 361.7 384.0 370.0C388.0 378.3 391.7 387.7 396.0 396.0C400.3 404.3 407.7 416.0 410.0 420.0M370.0 340.0C371.7 344.3 376.3 357.7 380.0 366.0C383.7 374.3 388.0 382.7 392.0 390.0C396.0 397.3 400.7 405.0 404.0 410.0C407.3 415.0 410.7 418.3 412.0 420.0M382.0 344.0L385.0 372.0L388.0 396.0L380.0 372.0L376.0 380.0L384.0 348.0M390.0 340.0C390.2 342.7 391.3 350.7 391.0 356.0C390.7 361.3 388.5 369.3 388.0 372.0M402.0 332.0L406.0 324.0L408.0 340.0L411.0 326.0L414.0 342.0L416.0 324.0M376.0 320.0L380.0 332.0L384.0 324.0L388.0 338.0L390.0 326.0M410.0 393.0L412.0 397.0M493.0 375.0C492.7 376.2 490.2 379.7 491.0 382.0C491.8 384.3 494.8 387.5 498.0 389.0C501.2 390.5 506.8 390.2 510.0 391.0C513.2 391.8 516.3 394.0 517.0 394.0C517.7 394.0 515.5 391.7 514.0 391.0C512.5 390.3 510.3 390.1 508.0 389.6C505.7 389.1 501.3 388.3 500.0 388.0M549.0 375.0C549.5 376.0 552.2 378.8 552.0 381.0C551.8 383.2 549.8 386.4 548.0 388.0C546.2 389.6 542.2 390.0 541.0 390.4M549.0 375.0C549.2 376.2 550.5 379.8 550.0 382.0C549.5 384.2 547.5 386.6 546.0 388.0C544.5 389.4 541.8 390.0 541.0 390.4M460.0 339.0C461.0 339.2 464.2 339.3 466.0 340.0C467.8 340.7 470.2 342.5 471.0 343.0M503.0 336.0C503.2 337.0 504.0 339.8 504.0 342.0C504.0 344.2 503.2 347.8 503.0 349.0"/>
<path d="M506.0 336.0C505.8 337.3 505.5 341.8 505.0 344.0C504.5 346.2 503.3 348.2 503.0 349.0M480.1 416.9C480.3 418.2 480.4 423.0 481.3 425.2C482.2 427.3 483.3 427.9 485.4 429.9C487.5 431.9 491.2 434.3 493.7 437.0C496.3 439.8 498.3 443.8 500.8 446.5C503.4 449.2 505.8 451.7 509.1 453.0C512.5 454.4 517.1 454.8 521.0 454.8C525.0 454.8 529.3 454.3 532.9 453.0C536.4 451.8 539.8 449.8 542.4 447.1C544.9 444.4 546.3 440.1 548.3 437.0C550.3 434.0 552.5 431.1 554.2 428.7C555.9 426.4 557.5 424.9 558.4 422.8C559.3 420.7 559.4 417.4 559.6 416.3M480.1 416.9C481.0 417.8 482.8 421.0 485.4 422.2C488.1 423.4 493.1 424.5 496.1 424.0C499.1 423.5 500.8 420.4 503.2 419.2C505.6 418.0 508.0 417.0 510.3 416.9C512.7 416.8 515.7 418.1 517.4 418.6C519.2 419.1 519.6 420.0 521.0 419.8C522.4 419.6 524.0 417.9 525.8 417.5C527.5 417.0 529.5 416.5 531.7 416.9C533.9 417.3 536.4 418.8 538.8 419.8C541.2 420.8 543.5 422.5 545.9 422.8C548.3 423.1 550.8 422.7 553.0 421.6C555.3 420.5 558.5 417.2 559.6 416.3M484.2 422.8C486.4 423.3 493.7 426.1 497.3 425.8C500.8 425.5 503.0 422.1 505.6 421.0C508.2 419.9 510.1 419.1 512.7 419.2C515.3 419.3 518.2 421.6 521.0 421.6C523.8 421.6 526.5 419.2 529.3 419.2C532.1 419.2 534.7 420.6 537.6 421.6C540.6 422.6 543.9 425.0 547.1 425.2C550.3 425.4 555.0 423.2 556.6 422.8M484.2 425.8C486.8 426.3 495.1 428.6 499.7 428.7C504.2 428.8 508.0 426.5 511.5 426.4C515.1 426.3 517.6 428.1 521.0 428.1C524.4 428.1 527.9 426.4 531.7 426.4C535.4 426.4 539.6 428.5 543.5 428.1C547.5 427.7 553.4 424.7 555.4 424.0M486.0 428.1C488.3 428.5 495.4 429.7 499.7 430.5C503.9 431.3 508.0 432.3 511.5 432.9C515.1 433.5 517.6 434.1 521.0 434.1C524.4 434.1 527.9 433.5 531.7 432.9C535.4 432.3 540.0 431.3 543.5 430.5C547.1 429.7 551.5 428.5 553.0 428.1M493.7 432.9C494.9 434.6 498.1 440.7 500.8 443.0C503.6 445.2 507.0 445.7 510.3 446.5C513.7 447.3 517.3 447.7 521.0 447.7C524.8 447.7 529.5 447.5 532.9 446.5C536.2 445.5 538.6 444.1 541.2 441.8C543.7 439.4 547.1 433.9 548.3 432.3M505.0 439.4C505.9 439.0 507.7 437.3 510.3 437.0C513.0 436.7 517.4 437.6 521.0 437.6C524.6 437.6 529.1 436.9 531.7 437.0C534.3 437.1 536.0 437.4 536.4 438.2C536.8 439.0 536.0 440.8 534.1 441.8C532.1 442.8 527.7 443.8 524.6 444.1C521.4 444.4 517.8 443.9 515.1 443.6C512.3 443.2 509.6 442.5 508.0 441.8C506.3 441.1 505.5 439.8 505.0 439.4M495.5 433.5C497.2 433.7 501.3 434.0 505.6 434.7C509.8 435.3 515.9 437.6 521.0 437.6C526.1 437.6 532.1 435.5 536.4 434.7C540.8 433.8 545.3 432.7 547.1 432.3M497.3 435.2 L502.0 444.1M628.0 310.0C627.8 311.7 627.7 315.0 627.0 320.0C626.3 325.0 625.2 331.7 624.0 340.0C622.8 348.3 620.7 365.0 620.0 370.0M678.0 270.0C677.8 275.0 677.7 290.7 677.0 300.0C676.3 309.3 675.5 317.7 674.0 326.0C672.5 334.3 670.0 342.7 668.0 350.0C666.0 357.3 663.0 366.7 662.0 370.0"/>
<path d="M656.0 270.0C657.0 273.3 660.5 283.3 662.0 290.0C663.5 296.7 664.3 303.3 665.0 310.0C665.7 316.7 666.2 323.3 666.0 330.0C665.8 336.7 665.3 343.3 664.0 350.0C662.7 356.7 659.0 366.7 658.0 370.0M703.0 270.0C703.3 271.3 704.6 275.3 705.0 278.0C705.4 280.7 705.5 284.7 705.6 286.0M685.0 273.0L692.0 283.0L683.0 284.0L693.0 295.0L682.0 298.0L700.0 312.0M680.0 322.0C680.3 325.0 680.7 333.7 682.0 340.0C683.3 346.3 687.0 356.7 688.0 360.0M680.0 322.0C680.8 324.3 683.7 329.7 685.0 336.0C686.3 342.3 687.5 356.0 688.0 360.0M682.0 328.0 L696.0 336.0M668.0 370.0L673.0 354.0L672.0 366.0L677.0 354.0L675.0 368.0L680.0 358.0M635.0 278.0 L640.0 270.0M635.0 278.0 L638.0 272.0M342.0 397.0C343.3 400.0 348.3 408.7 350.0 415.0C351.7 421.3 352.3 428.3 352.0 435.0C351.7 441.7 349.7 448.7 348.0 455.0C346.3 461.3 343.0 470.0 342.0 473.0M342.0 473.0C343.3 470.7 347.8 463.7 350.0 459.0C352.2 454.3 354.4 444.0 355.0 445.0C355.6 446.0 353.4 457.3 353.6 465.0C353.8 472.7 355.6 486.7 356.0 491.0M340.0 395.0C342.7 397.7 350.3 406.0 356.0 411.0C361.7 416.0 368.0 419.3 374.0 425.0C380.0 430.7 389.0 441.7 392.0 445.0"/>
<path d="M392.0 445.0C390.7 441.0 386.7 429.3 384.0 421.0C381.3 412.7 377.3 399.3 376.0 395.0M360.0 395.0C361.3 397.3 365.5 403.8 368.0 409.0C370.5 414.2 373.8 423.2 375.0 426.0M375.0 426.0C374.8 422.8 374.7 412.2 374.0 407.0C373.3 401.8 371.5 397.0 371.0 395.0M380.0 395.0C381.0 398.7 384.2 409.8 386.0 417.0C387.8 424.2 390.2 434.5 391.0 438.0M392.0 395.0C394.7 399.3 402.7 412.7 408.0 421.0C413.3 429.3 418.7 438.3 424.0 445.0C429.3 451.7 434.0 455.7 440.0 461.0C446.0 466.3 453.3 472.7 460.0 477.0C466.7 481.3 476.7 485.3 480.0 487.0M398.0 395.0C400.3 398.7 407.7 408.7 412.0 417.0C416.3 425.3 421.8 438.7 424.0 445.0C426.2 451.3 425.3 450.0 425.0 455.0C424.7 460.0 422.2 469.0 422.0 475.0C421.8 481.0 423.7 488.3 424.0 491.0M440.0 395.0C441.3 400.0 445.3 415.0 448.0 425.0C450.7 435.0 453.3 446.3 456.0 455.0C458.7 463.7 462.7 473.3 464.0 477.0M358.0 491.0C357.7 488.3 355.8 480.8 356.0 475.0C356.2 469.2 357.7 456.0 359.0 456.0C360.3 456.0 362.8 469.2 364.0 475.0C365.2 480.8 365.7 488.3 366.0 491.0M379.0 491.0L381.0 477.0L384.0 491.0M398.0 491.0L396.0 463.0L395.0 479.0L397.0 491.0M403.0 491.0C402.8 489.0 401.8 483.7 402.0 479.0C402.2 474.3 403.0 463.0 404.0 463.0C405.0 463.0 406.7 474.3 408.0 479.0C409.3 483.7 411.3 489.0 412.0 491.0M376.0 491.0L377.0 487.0"/>
<path d="M460.0 477.0C462.7 478.3 470.7 482.7 476.0 485.0C481.3 487.3 489.3 490.0 492.0 491.0M460.0 465.0 L464.0 479.0M646.0 395.0C644.3 398.3 640.3 407.7 636.0 415.0C631.7 422.3 626.0 431.3 620.0 439.0C614.0 446.7 606.7 454.7 600.0 461.0C593.3 467.3 586.7 472.7 580.0 477.0C573.3 481.3 565.7 484.6 560.0 487.0C554.3 489.4 548.3 490.7 546.0 491.4M615.0 395.0C613.8 399.0 610.8 410.0 608.0 419.0C605.2 428.0 601.0 441.0 598.0 449.0C595.0 457.0 591.3 464.0 590.0 467.0M344.0 116.0C342.5 117.3 337.7 121.7 335.0 124.0C332.3 126.3 329.2 129.0 328.0 130.0M344.0 116.0C343.3 117.0 341.7 119.7 340.0 122.0C338.3 124.3 335.0 128.7 334.0 130.0M522.0 118.0C521.8 131.7 521.2 153.0 521.0 200.0C520.8 247.0 520.8 351.5 521.0 400.0C521.2 448.5 521.8 475.8 522.0 491.0M360.0 272.0C366.7 271.7 380.0 270.7 400.0 270.0C420.0 269.3 453.3 268.3 480.0 268.0C506.7 267.7 535.3 267.8 560.0 268.0C584.7 268.2 608.3 268.3 628.0 269.0C647.7 269.7 669.7 271.5 678.0 272.0M364.0 324.0C369.2 324.7 382.0 326.5 395.0 328.0C408.0 329.5 425.3 331.8 442.0 333.0C458.7 334.2 482.0 334.5 495.0 335.0C508.0 335.5 509.2 336.1 520.0 336.0C530.8 335.9 547.2 335.3 560.0 334.5C572.8 333.7 584.3 331.9 597.0 331.0C609.7 330.1 623.2 330.2 636.0 329.0C648.8 327.8 667.7 324.8 674.0 324.0M376.0 360.0C380.0 361.3 389.3 365.2 400.0 368.0C410.7 370.8 426.7 374.7 440.0 377.0C453.3 379.3 466.7 380.7 480.0 382.0C493.3 383.3 508.3 384.8 520.0 385.0C531.7 385.2 540.0 384.0 550.0 383.0C560.0 382.0 568.3 381.2 580.0 379.0C591.7 376.8 606.7 373.2 620.0 370.0C633.3 366.8 650.7 362.7 660.0 360.0C669.3 357.3 673.3 355.0 676.0 354.0M627.6 264.0L627.6 310.0M660.0 362.0C658.3 366.7 654.0 381.3 650.0 390.0C646.0 398.7 640.3 407.3 636.0 414.0C631.7 420.7 626.0 427.3 624.0 430.0"/>
<path d="M626.0 330.0C625.3 335.0 623.7 349.3 622.0 360.0C620.3 370.7 617.0 388.3 616.0 394.0M460.0 124.0C458.7 125.0 454.3 125.7 452.0 130.0C449.7 134.3 448.0 141.7 446.0 150.0C444.0 158.3 441.7 170.0 440.0 180.0C438.3 190.0 437.2 198.3 436.0 210.0C434.8 221.7 433.7 235.0 433.0 250.0C432.3 265.0 431.8 285.0 432.0 300.0C432.2 315.0 433.0 328.3 434.0 340.0C435.0 351.7 436.3 360.0 438.0 370.0C439.7 380.0 443.0 395.0 444.0 400.0M619.4 322.6C619.3 323.4 619.1 325.7 618.7 327.2C618.2 328.7 617.5 330.2 616.5 331.5C615.6 332.8 614.4 334.1 613.1 335.2C611.8 336.3 610.3 337.2 608.7 338.0C607.1 338.8 605.3 339.4 603.5 339.8C601.8 340.2 599.8 340.4 598.0 340.4C596.2 340.4 594.2 340.2 592.5 339.8C590.7 339.4 588.9 338.8 587.3 338.0C585.7 337.2 584.2 336.3 582.9 335.2C581.6 334.1 580.4 332.8 579.5 331.5C578.5 330.2 577.8 328.7 577.3 327.2C576.9 325.7 576.6 324.1 576.6 322.6C576.6 321.1 576.9 319.5 577.3 318.0C577.8 316.5 578.5 315.0 579.5 313.7C580.4 312.4 581.6 311.1 582.9 310.0C584.2 308.9 585.7 308.0 587.3 307.2C588.9 306.4 590.7 305.8 592.5 305.4C594.2 305.0 596.2 304.8 598.0 304.8C599.8 304.8 601.8 305.0 603.5 305.4C605.3 305.8 607.1 306.4 608.7 307.2C610.3 308.0 611.8 308.9 613.1 310.0C614.4 311.1 615.6 312.4 616.5 313.7C617.5 315.0 618.2 316.5 618.7 318.0C619.1 319.5 619.3 321.8 619.4 322.6M611.7 321.4C611.6 321.9 611.6 323.6 611.3 324.6C611.0 325.7 610.6 326.7 610.0 327.6C609.5 328.6 608.8 329.5 608.0 330.2C607.3 331.0 606.4 331.7 605.5 332.2C604.5 332.8 603.5 333.2 602.4 333.5C601.4 333.8 600.3 333.9 599.2 333.9C598.1 333.9 597.0 333.8 596.0 333.5C594.9 333.2 593.9 332.8 593.0 332.2C592.0 331.7 591.1 331.0 590.4 330.2C589.6 329.5 588.9 328.6 588.4 327.6C587.8 326.7 587.4 325.7 587.1 324.6C586.8 323.6 586.7 322.5 586.7 321.4C586.7 320.3 586.8 319.2 587.1 318.2C587.4 317.1 587.8 316.1 588.4 315.1C588.9 314.2 589.6 313.3 590.4 312.6C591.1 311.8 592.0 311.1 593.0 310.6C593.9 310.0 594.9 309.6 596.0 309.3C597.0 309.0 598.1 308.9 599.2 308.9C600.3 308.9 601.4 309.0 602.4 309.3C603.5 309.6 604.5 310.0 605.5 310.6C606.4 311.1 607.3 311.8 608.0 312.6C608.8 313.3 609.5 314.2 610.0 315.1C610.6 316.1 611.0 317.1 611.3 318.2C611.6 319.2 611.6 320.9 611.7 321.4M610.8 313.7C610.7 314.0 610.6 314.9 610.4 315.3C610.1 315.8 609.6 316.3 609.1 316.6C608.7 316.8 608.0 317.0 607.5 317.0C607.0 317.0 606.3 316.8 605.9 316.6C605.4 316.3 604.9 315.8 604.6 315.3C604.4 314.9 604.2 314.2 604.2 313.7C604.2 313.1 604.4 312.5 604.6 312.1C604.9 311.6 605.4 311.1 605.9 310.8C606.3 310.6 607.0 310.4 607.5 310.4C608.0 310.4 608.7 310.6 609.1 310.8C609.6 311.1 610.1 311.6 610.4 312.1C610.6 312.5 610.7 313.4 610.8 313.7M593.7 327.4C593.6 327.9 593.4 329.4 592.9 330.2C592.5 331.1 591.7 331.9 590.9 332.3C590.0 332.8 589.0 333.1 588.0 333.1C587.0 333.1 586.0 332.8 585.1 332.3C584.3 331.9 583.5 331.1 583.1 330.2C582.6 329.4 582.3 328.3 582.3 327.4C582.3 326.4 582.6 325.4 583.1 324.5C583.5 323.7 584.3 322.9 585.1 322.5C586.0 322.0 587.0 321.7 588.0 321.7C589.0 321.7 590.0 322.0 590.9 322.5C591.7 322.9 592.5 323.7 592.9 324.5C593.4 325.4 593.6 326.9 593.7 327.4M612.1 324.2C612.1 324.5 612.5 325.4 612.2 326.1C612.0 326.9 611.3 327.9 610.6 328.7C609.8 329.6 608.7 330.6 607.7 331.3C606.6 332.0 605.4 332.7 604.3 333.1C603.2 333.6 602.1 333.8 601.3 333.8C600.5 333.8 599.8 333.5 599.5 333.0C599.2 332.6 599.1 331.8 599.4 331.1C599.6 330.3 600.3 329.3 601.0 328.5C601.8 327.6 602.9 326.6 603.9 325.9C605.0 325.2 606.2 324.5 607.3 324.1C608.4 323.6 609.5 323.4 610.3 323.4C611.1 323.4 611.8 324.1 612.1 324.2M559.5 329.1C560.5 326.2 562.7 316.3 565.4 311.4C568.2 306.4 572.1 302.3 576.1 299.5C580.1 296.7 584.8 295.3 589.1 294.7C593.5 294.2 598.0 294.7 602.2 295.9C606.3 297.1 610.5 299.5 614.1 301.9C617.6 304.2 620.6 307.2 623.5 310.2C626.5 313.1 629.7 316.5 631.9 319.7C634.0 322.8 635.8 327.6 636.6 329.1M562.5 314.3C564.3 312.2 569.5 304.6 573.7 301.9C578.0 299.1 583.2 298.2 588.0 297.7C592.7 297.2 597.8 297.8 602.2 298.9C606.5 300.0 610.5 302.0 614.1 304.2C617.6 306.5 621.0 309.6 623.5 312.5C626.1 315.5 628.0 318.5 629.5 322.0C631.0 325.6 631.9 331.9 632.4 333.9M564.2 324.4C564.8 322.6 565.4 316.9 567.8 313.7C570.2 310.6 574.5 307.4 578.5 305.4C582.4 303.4 587.2 302.3 591.5 301.9C595.9 301.5 600.6 301.9 604.6 303.0C608.5 304.2 612.1 306.4 615.2 309.0C618.4 311.6 621.6 315.1 623.5 318.5C625.5 321.8 626.5 327.4 627.1 329.1M568.4 335.1C568.3 332.7 567.5 324.2 567.8 320.8C568.1 317.5 569.8 315.9 570.2 314.9M569.6 342.8C571.5 342.1 576.6 339.5 580.8 338.6C585.1 337.7 590.3 337.5 595.1 337.4C599.8 337.4 605.2 337.5 609.3 338.0C613.5 338.5 618.2 340.0 620.0 340.4"/>
<path d="M569.6 342.8C571.8 342.4 578.6 340.9 583.2 340.4C587.9 339.9 593.1 339.9 597.4 339.8C601.8 339.7 605.6 339.7 609.3 339.8C613.1 339.9 618.2 340.3 620.0 340.4M627.7 290.0C627.6 294.9 627.6 311.7 627.1 319.7C626.6 327.6 625.4 332.4 624.7 337.4C624.0 342.5 623.3 347.9 623.0 350.0M625.9 310.2C626.7 312.3 629.5 319.3 630.7 323.2C631.9 327.2 632.6 332.1 633.0 333.9M598.6 321.1L599.8 321.8M467.4 322.6C467.3 323.3 467.1 325.6 466.7 327.1C466.2 328.5 465.5 329.9 464.5 331.2C463.6 332.5 462.4 333.7 461.1 334.8C459.8 335.8 458.3 336.8 456.7 337.5C455.1 338.2 453.3 338.8 451.5 339.2C449.8 339.6 447.8 339.8 446.0 339.8C444.2 339.8 442.2 339.6 440.5 339.2C438.7 338.8 436.9 338.2 435.3 337.5C433.7 336.8 432.2 335.8 430.9 334.8C429.6 333.7 428.4 332.5 427.5 331.2C426.5 329.9 425.8 328.5 425.3 327.1C424.9 325.6 424.6 324.1 424.6 322.6C424.6 321.1 424.9 319.6 425.3 318.1C425.8 316.7 426.5 315.3 427.5 314.0C428.4 312.7 429.6 311.5 430.9 310.4C432.2 309.4 433.7 308.4 435.3 307.7C436.9 307.0 438.7 306.4 440.5 306.0C442.2 305.6 444.2 305.4 446.0 305.4C447.8 305.4 449.8 305.6 451.5 306.0C453.3 306.4 455.1 307.0 456.7 307.7C458.3 308.4 459.8 309.4 461.1 310.4C462.4 311.5 463.6 312.7 464.5 314.0C465.5 315.3 466.2 316.7 466.7 318.1C467.1 319.6 467.3 321.9 467.4 322.6M457.3 321.4C457.2 321.9 457.2 323.5 456.9 324.5C456.6 325.5 456.2 326.5 455.7 327.3C455.2 328.2 454.5 329.1 453.8 329.8C453.1 330.5 452.2 331.2 451.3 331.7C450.5 332.2 449.5 332.6 448.5 332.9C447.5 333.2 446.4 333.3 445.4 333.3C444.4 333.3 443.3 333.2 442.3 332.9C441.3 332.6 440.3 332.2 439.4 331.7C438.6 331.2 437.7 330.5 437.0 329.8C436.3 329.1 435.6 328.2 435.1 327.3C434.6 326.5 434.2 325.5 433.9 324.5C433.6 323.5 433.5 322.4 433.5 321.4C433.5 320.4 433.6 319.3 433.9 318.3C434.2 317.3 434.6 316.3 435.1 315.4C435.6 314.6 436.3 313.7 437.0 313.0C437.7 312.3 438.6 311.6 439.4 311.1C440.3 310.6 441.3 310.2 442.3 309.9C443.3 309.6 444.4 309.5 445.4 309.5C446.4 309.5 447.5 309.6 448.5 309.9C449.5 310.2 450.5 310.6 451.3 311.1C452.2 311.6 453.1 312.3 453.8 313.0C454.5 313.7 455.2 314.6 455.7 315.4C456.2 316.3 456.6 317.3 456.9 318.3C457.2 319.3 457.2 320.9 457.3 321.4M456.7 313.7C456.6 313.9 456.5 314.8 456.3 315.2C456.0 315.6 455.6 316.0 455.2 316.3C454.8 316.5 454.2 316.7 453.7 316.7C453.2 316.7 452.6 316.5 452.2 316.3C451.8 316.0 451.4 315.6 451.1 315.2C450.9 314.8 450.7 314.2 450.7 313.7C450.7 313.2 450.9 312.6 451.1 312.2C451.4 311.8 451.8 311.4 452.2 311.1C452.6 310.9 453.2 310.7 453.7 310.7C454.2 310.7 454.8 310.9 455.2 311.1C455.6 311.4 456.0 311.8 456.3 312.2C456.5 312.6 456.6 313.4 456.7 313.7M440.0 328.0C439.9 328.5 439.7 330.1 439.2 330.9C438.7 331.8 437.9 332.6 437.1 333.1C436.2 333.6 435.1 333.9 434.1 333.9C433.1 333.9 432.0 333.6 431.2 333.1C430.3 332.6 429.5 331.8 429.0 330.9C428.5 330.1 428.2 329.0 428.2 328.0C428.2 327.0 428.5 325.9 429.0 325.1C429.5 324.2 430.3 323.4 431.2 322.9C432.0 322.4 433.1 322.1 434.1 322.1C435.1 322.1 436.2 322.4 437.1 322.9C437.9 323.4 438.7 324.2 439.2 325.1C439.7 325.9 439.9 327.5 440.0 328.0M458.8 323.6C458.8 323.9 459.1 324.7 458.8 325.4C458.5 326.1 457.9 327.1 457.1 327.9C456.4 328.8 455.3 329.7 454.2 330.5C453.2 331.2 451.9 331.9 450.8 332.3C449.8 332.8 448.7 333.0 447.9 333.1C447.1 333.1 446.5 332.8 446.2 332.4C445.9 332.0 445.9 331.3 446.2 330.6C446.5 329.9 447.1 328.9 447.9 328.1C448.6 327.2 449.7 326.3 450.8 325.5C451.8 324.8 453.1 324.1 454.2 323.7C455.2 323.2 456.3 323.0 457.1 322.9C457.9 322.9 458.5 323.5 458.8 323.6M399.7 326.8C401.1 324.2 404.5 315.7 408.0 311.4C411.6 307.0 416.6 303.3 421.1 300.7C425.6 298.0 430.8 296.2 435.3 295.3C439.9 294.4 444.2 294.4 448.4 295.3C452.5 296.2 456.9 298.6 460.2 300.7C463.6 302.8 466.4 305.5 468.5 307.8C470.7 310.1 472.5 313.2 473.3 314.3M403.3 333.9C404.5 330.7 407.3 319.9 410.4 314.9C413.6 310.0 417.9 306.9 422.3 304.2C426.6 301.6 432.0 299.7 436.5 298.9C441.1 298.1 445.4 298.4 449.6 299.5C453.7 300.6 457.9 302.7 461.4 305.4C465.0 308.2 468.5 312.1 470.9 316.1C473.3 320.1 474.9 327.0 475.7 329.1M405.7 337.4C406.9 334.3 409.6 323.4 412.8 318.5C416.0 313.5 420.3 310.5 424.7 307.8C429.0 305.1 434.5 303.1 438.9 302.5C443.2 301.8 447.0 302.5 450.8 303.6C454.5 304.8 458.5 306.9 461.4 309.6C464.4 312.2 466.8 316.6 468.5 319.7C470.3 322.7 471.5 326.6 472.1 328.0"/>
<path d="M423.5 331.5C423.7 328.6 422.9 317.9 424.7 313.7C426.4 309.6 430.2 308.0 434.1 306.6C438.1 305.2 444.0 304.7 448.4 305.4C452.7 306.1 457.3 308.4 460.2 310.8C463.2 313.1 465.0 315.6 466.2 319.7C467.4 323.7 467.2 332.5 467.4 335.1M420.5 340.4C422.6 339.9 428.7 338.0 433.0 337.4C437.2 336.9 441.7 336.8 446.0 336.9C450.4 337.0 454.8 337.1 459.1 338.0C463.3 339.0 469.4 342.0 471.5 342.8M420.5 340.4C422.8 340.3 429.7 339.8 434.1 339.8C438.6 339.8 442.6 340.2 447.2 340.4C451.7 340.6 457.4 340.6 461.4 341.0C465.5 341.4 469.8 342.5 471.5 342.8M444.8 321.1L446.0 321.8M438.8 270.0C441.2 270.7 448.6 272.3 452.8 274.2C457.0 276.1 462.2 280.0 464.0 281.2M447.2 270.0C449.1 270.9 455.6 273.7 458.4 275.6C461.2 277.5 463.1 280.3 464.0 281.2M393.3 368.8C393.3 369.3 393.5 370.8 393.4 371.8C393.3 372.8 393.0 373.8 392.7 374.8C392.3 375.7 391.7 376.7 391.1 377.5C390.5 378.3 389.7 379.1 388.9 379.7C388.1 380.4 387.1 380.9 386.1 381.4C385.1 381.8 384.1 382.1 383.0 382.3C381.9 382.5 380.8 382.6 379.7 382.5C378.7 382.4 377.6 382.2 376.6 381.9C375.6 381.6 374.6 381.1 373.7 380.5C372.8 380.0 372.0 379.3 371.3 378.5C370.7 377.8 370.1 376.9 369.6 376.0C369.2 375.1 368.9 374.1 368.7 373.2C368.5 372.2 368.5 371.2 368.6 370.2C368.7 369.2 369.0 368.2 369.3 367.2C369.7 366.3 370.3 365.3 370.9 364.5C371.5 363.7 372.3 362.9 373.1 362.3C373.9 361.6 374.9 361.1 375.9 360.6C376.9 360.2 377.9 359.9 379.0 359.7C380.1 359.5 381.2 359.4 382.3 359.5C383.3 359.6 384.4 359.8 385.4 360.1C386.4 360.4 387.4 360.9 388.3 361.5C389.2 362.0 390.0 362.7 390.7 363.5C391.3 364.2 391.9 365.1 392.4 366.0C392.8 366.9 393.2 368.4 393.3 368.8M398.3 389.1C398.1 389.5 397.6 390.6 397.1 391.3C396.5 391.9 395.9 392.5 395.1 393.0C394.4 393.5 393.6 393.9 392.7 394.2C391.8 394.5 390.8 394.7 389.8 394.8C388.8 394.9 387.8 394.8 386.8 394.7C385.8 394.5 384.7 394.3 383.8 393.9C382.8 393.6 381.8 393.1 380.9 392.6C380.1 392.0 379.3 391.4 378.5 390.7C377.8 390.0 377.2 389.2 376.7 388.4C376.2 387.6 375.9 386.8 375.6 385.9C375.4 385.1 375.2 384.2 375.3 383.3C375.3 382.5 375.4 381.7 375.7 380.9C376.0 380.1 376.4 379.4 376.9 378.7C377.5 378.1 378.1 377.5 378.9 377.0C379.6 376.5 380.4 376.1 381.3 375.8C382.2 375.5 383.2 375.3 384.2 375.2C385.2 375.1 386.2 375.2 387.2 375.3C388.2 375.5 389.3 375.7 390.2 376.1C391.2 376.4 392.2 376.9 393.1 377.4C393.9 378.0 394.7 378.6 395.5 379.3C396.2 380.0 396.8 380.8 397.3 381.6C397.8 382.4 398.1 383.2 398.4 384.1C398.6 384.9 398.8 385.8 398.7 386.7C398.7 387.5 398.4 388.7 398.3 389.1M390.0 340.1C390.2 341.4 390.9 345.4 391.1 348.1C391.2 350.7 391.2 353.4 391.0 355.9C390.7 358.4 390.3 360.9 389.6 363.1C389.0 365.4 388.2 367.6 387.2 369.5C386.2 371.4 385.0 373.1 383.7 374.6C382.4 376.1 381.0 377.3 379.4 378.2C377.9 379.2 376.2 379.9 374.5 380.2C372.8 380.6 371.0 380.6 369.2 380.4C367.4 380.2 365.5 379.7 363.8 378.8C362.0 378.0 360.2 376.9 358.5 375.6C356.8 374.2 355.2 372.6 353.7 370.8C352.2 369.0 350.8 366.9 349.5 364.7C348.3 362.5 347.2 360.1 346.3 357.6C345.3 355.1 344.6 352.5 344.0 349.9C343.5 347.3 343.1 344.6 342.9 341.9C342.8 339.3 342.8 336.6 343.0 334.1C343.3 331.6 343.7 329.1 344.4 326.9C345.0 324.6 345.8 322.4 346.8 320.5C347.8 318.6 349.0 316.9 350.3 315.4C351.6 313.9 353.0 312.7 354.6 311.8C356.1 310.8 357.8 310.1 359.5 309.8C361.2 309.4 363.0 309.4 364.8 309.6C366.6 309.8 368.5 310.3 370.2 311.2C372.0 312.0 373.8 313.1 375.5 314.4C377.2 315.8 378.8 317.4 380.3 319.2C381.8 321.0 383.2 323.1 384.5 325.3C385.7 327.5 386.8 329.9 387.7 332.4C388.7 334.9 389.6 338.8 390.0 340.1M693.3 350.6C692.9 351.9 691.8 355.9 690.8 358.4C689.7 360.9 688.5 363.4 687.2 365.6C685.9 367.8 684.4 369.9 682.9 371.7C681.3 373.6 679.6 375.2 677.9 376.5C676.2 377.9 674.4 379.0 672.6 379.8C670.8 380.5 669.0 381.0 667.2 381.2C665.5 381.4 663.7 381.3 662.0 380.9C660.4 380.5 658.8 379.8 657.3 378.8C655.8 377.8 654.5 376.5 653.3 374.9C652.0 373.4 651.0 371.6 650.1 369.6C649.2 367.6 648.5 365.4 648.0 363.0C647.5 360.7 647.1 358.1 647.0 355.6C646.9 353.0 647.0 350.3 647.3 347.6C647.5 344.9 648.0 342.1 648.7 339.4C649.3 336.8 650.2 334.1 651.2 331.6C652.3 329.1 653.5 326.6 654.8 324.4C656.1 322.2 657.6 320.1 659.1 318.3C660.7 316.4 662.4 314.8 664.1 313.5C665.8 312.1 667.6 311.0 669.4 310.2C671.2 309.5 673.0 309.0 674.8 308.8C676.5 308.6 678.3 308.7 680.0 309.1C681.6 309.5 683.2 310.2 684.7 311.2C686.2 312.2 687.5 313.5 688.7 315.1C690.0 316.6 691.0 318.4 691.9 320.4C692.8 322.4 693.5 324.6 694.0 327.0C694.5 329.3 694.9 331.9 695.0 334.4C695.1 337.0 695.0 339.7 694.7 342.4C694.5 345.1 693.6 349.2 693.3 350.6M668.4 365.0C668.6 365.4 669.6 366.7 669.8 367.8C670.0 369.0 670.0 370.3 669.8 371.6C669.5 373.0 669.0 374.5 668.3 375.9C667.6 377.4 666.6 378.9 665.5 380.3C664.4 381.8 663.1 383.2 661.7 384.4C660.3 385.7 658.8 386.8 657.2 387.8C655.7 388.7 654.1 389.5 652.6 390.1C651.0 390.6 649.5 391.0 648.1 391.1C646.7 391.2 645.4 391.1 644.3 390.8C643.3 390.4 642.3 389.8 641.6 389.0C640.9 388.3 640.4 387.3 640.2 386.2C640.0 385.0 640.0 383.7 640.2 382.4C640.5 381.0 641.0 379.5 641.7 378.1C642.4 376.6 643.4 375.1 644.5 373.7C645.6 372.2 646.9 370.8 648.3 369.6C649.7 368.3 651.2 367.2 652.8 366.2C654.3 365.3 655.9 364.5 657.4 363.9C659.0 363.4 660.5 363.0 661.9 362.9C663.3 362.8 664.6 362.9 665.7 363.2C666.7 363.6 667.9 364.7 668.4 365.0M405.6 132.8C408.0 130.1 415.5 120.8 420.0 116.8C424.5 112.8 428.8 110.7 432.8 108.8C436.8 106.9 442.1 106.1 444.0 105.6"/>
<path d="M396.0 160.0C398.1 156.8 404.3 146.1 408.8 140.8C413.3 135.5 417.9 131.5 423.2 128.0C428.5 124.5 437.9 121.3 440.8 120.0M412.0 160.0C414.1 157.3 420.8 149.3 424.8 144.0C428.8 138.7 433.3 132.0 436.0 128.0C438.7 124.0 440.0 121.3 440.8 120.0M428.0 160.0C428.5 157.9 429.3 151.7 431.2 147.2C433.1 142.7 435.7 136.3 439.2 132.8C442.7 129.3 448.0 129.1 452.0 126.4C456.0 123.7 459.2 120.5 463.2 116.8C467.2 113.1 473.9 106.1 476.0 104.0M432.8 137.6L436.0 152.0L442.4 140.8L444.0 155.2L452.0 144.0M447.2 160.0C447.7 155.5 449.1 138.4 450.4 132.8C451.7 127.2 454.4 127.5 455.2 126.4M456.8 134.4C458.9 133.3 465.3 129.9 469.6 128.0C473.9 126.1 478.7 125.1 482.4 123.2C486.1 121.3 490.4 117.9 492.0 116.8M460.0 147.2C461.6 145.9 465.9 142.1 469.6 139.2C473.3 136.3 480.3 131.2 482.4 129.6M469.6 160.0C471.7 157.9 478.7 151.2 482.4 147.2C486.1 143.2 488.8 139.5 492.0 136.0C495.2 132.5 500.0 128.0 501.6 126.4M482.4 144.0L492.0 139.2L500.0 134.4L488.8 147.2L504.8 136.0L495.2 150.4L512.8 137.6L503.2 153.6L520.8 140.8M482.4 86.4L460.0 112.0L482.4 100.8M517.6 103.2L503.2 112.0L512.8 108.0M532.0 100.8L536.8 110.4L540.0 108.8"/>
<path d="M380.0 112.0C382.7 109.3 390.7 100.5 396.0 96.0C401.3 91.5 407.7 87.5 412.0 84.8C416.3 82.1 420.0 80.8 421.6 80.0M415.2 92.8C417.3 91.5 424.5 86.9 428.0 84.8C431.5 82.7 434.7 80.8 436.0 80.0M434.4 100.8C437.3 99.2 446.1 93.9 452.0 91.2C457.9 88.5 464.5 85.6 469.6 84.8C474.7 84.0 480.3 86.1 482.4 86.4M520.0 111.2C521.6 110.1 526.1 106.7 529.6 104.8C533.1 102.9 538.9 100.8 540.8 100.0M524.8 112.8C526.9 111.7 533.6 108.5 537.6 106.4C541.6 104.3 546.9 101.1 548.8 100.0M520.0 152.8C521.1 149.9 523.7 140.5 526.4 135.2C529.1 129.9 533.6 125.1 536.0 120.8C538.4 116.5 540.0 111.5 540.8 109.6M523.2 176.8C524.3 173.3 526.9 162.1 529.6 156.0C532.3 149.9 536.0 144.8 539.2 140.0C542.4 135.2 546.7 130.9 548.8 127.2C550.9 123.5 551.5 119.2 552.0 117.6M536.0 180.0C537.1 176.8 539.7 167.5 542.4 160.8C545.1 154.1 549.1 146.7 552.0 140.0C554.9 133.3 558.1 126.4 560.0 120.8C561.9 115.2 562.7 108.8 563.2 106.4M552.0 180.0C553.3 176.0 557.6 164.0 560.0 156.0C562.4 148.0 564.8 139.2 566.4 132.0C568.0 124.8 568.3 118.1 569.6 112.8C570.9 107.5 573.6 102.1 574.4 100.0M563.2 180.0C564.5 177.3 568.8 169.6 571.2 164.0C573.6 158.4 576.0 151.7 577.6 146.4C579.2 141.1 580.3 134.4 580.8 132.0M532.8 140.0L537.6 159.2L540.8 144.8L544.0 164.0L548.8 141.6L545.6 168.8M526.4 132.0L536.0 114.4L529.6 127.2L545.6 116.0L539.2 128.8L552.0 116.0"/>
<path d="M558.4 119.2C557.3 122.7 554.4 132.5 552.0 140.0C549.6 147.5 546.7 157.3 544.0 164.0C541.3 170.7 537.3 177.3 536.0 180.0M580.8 132.0C582.7 135.5 588.3 146.1 592.0 152.8C595.7 159.5 600.5 167.5 603.2 172.0C605.9 176.5 607.2 178.7 608.0 180.0M584.0 118.4C585.1 120.7 588.0 128.4 590.4 132.0C592.8 135.6 597.1 138.7 598.4 140.0M584.0 118.4C585.9 120.9 592.0 129.7 595.2 133.6C598.4 137.5 601.9 140.3 603.2 141.6M603.2 141.6C604.8 143.5 609.6 148.5 612.8 152.8C616.0 157.1 619.2 162.7 622.4 167.2C625.6 171.7 630.4 177.9 632.0 180.0M604.8 144.8C606.7 146.4 612.0 150.7 616.0 154.4C620.0 158.1 624.8 162.9 628.8 167.2C632.8 171.5 638.1 177.9 640.0 180.0M624.0 140.0L632.0 148.0L630.4 140.0L638.4 144.8L632.0 132.0L643.2 138.4M648.0 140.0C649.3 141.9 653.1 147.5 656.0 151.2C658.9 154.9 664.0 160.5 665.6 162.4M648.0 140.0C648.5 142.1 651.2 148.8 651.2 152.8C651.2 156.8 647.5 160.8 648.0 164.0C648.5 167.2 652.8 169.3 654.4 172.0C656.0 174.7 657.1 178.7 657.6 180.0M633.6 154.4C634.9 156.5 638.4 162.9 641.6 167.2C644.8 171.5 650.9 177.9 652.8 180.0M310.8 190.0C309.7 193.2 306.3 202.3 304.4 209.2C302.5 216.1 300.5 224.1 299.6 231.6C298.7 239.1 298.8 247.6 298.8 254.0C298.8 260.4 299.5 267.3 299.6 270.0M320.4 190.0C319.1 193.5 314.5 203.3 312.4 210.8C310.3 218.3 308.7 227.6 307.6 234.8C306.5 242.0 306.0 248.1 306.0 254.0C306.0 259.9 307.3 267.3 307.6 270.0"/>
<path d="M317.2 257.2C316.7 254.0 314.8 244.9 314.0 238.0C313.2 231.1 312.1 222.0 312.4 215.6C312.7 209.2 314.5 198.5 315.6 199.6C316.7 200.7 318.4 214.8 318.8 222.0C319.2 229.2 318.3 236.9 318.0 242.8C317.7 248.7 317.3 254.8 317.2 257.2M342.8 190.0C341.2 193.2 335.9 202.3 333.2 209.2C330.5 216.1 328.4 224.1 326.8 231.6C325.2 239.1 324.4 247.6 323.6 254.0C322.8 260.4 322.3 267.3 322.0 270.0M338.0 270.0C338.3 265.5 338.5 251.3 339.6 242.8C340.7 234.3 342.8 226.0 344.4 218.8C346.0 211.6 348.4 199.1 349.2 199.6C350.0 200.1 349.7 214.5 349.2 222.0C348.7 229.5 347.1 236.4 346.0 244.4C344.9 252.4 343.3 265.7 342.8 270.0M312.4 238.0L315.6 257.2L320.4 238.0L322.0 260.4L328.4 236.4L328.4 258.8L334.8 234.8L334.8 260.4L341.2 236.4L339.6 262.0L346.0 230.0L344.4 258.8M362.0 190.0C361.2 192.7 358.3 199.3 357.2 206.0C356.1 212.7 355.7 222.0 355.6 230.0C355.5 238.0 356.1 247.3 356.4 254.0C356.7 260.7 357.1 267.3 357.2 270.0M373.2 190.0C372.4 193.2 369.7 202.8 368.4 209.2C367.1 215.6 365.7 225.2 365.2 228.4M365.2 228.4C366.5 224.7 370.8 212.4 373.2 206.0C375.6 199.6 378.5 192.7 379.6 190.0M389.2 190.0C388.4 193.7 386.0 204.4 384.4 212.4C382.8 220.4 380.9 230.0 379.6 238.0C378.3 246.0 376.9 255.1 376.4 260.4C375.9 265.7 376.4 268.4 376.4 270.0M392.4 190.0C391.3 195.3 387.6 212.7 386.0 222.0C384.4 231.3 383.6 238.0 382.8 246.0C382.0 254.0 381.5 266.0 381.2 270.0M406.8 190.0C405.5 194.0 401.2 206.0 398.8 214.0C396.4 222.0 394.3 230.3 392.4 238.0C390.5 245.7 388.7 255.1 387.6 260.4C386.5 265.7 386.3 268.4 386.0 270.0M411.6 190.0C410.0 194.5 404.9 207.9 402.0 217.2C399.1 226.5 396.1 237.2 394.0 246.0C391.9 254.8 390.0 266.0 389.2 270.0M434.0 190.0C432.7 193.5 428.9 203.3 426.0 210.8C423.1 218.3 419.1 227.9 416.4 234.8C413.7 241.7 411.1 249.5 410.0 252.4"/>
<path d="M410.0 252.4C411.6 248.4 416.1 236.1 419.6 228.4C423.1 220.7 427.3 212.4 430.8 206.0C434.3 199.6 438.8 192.7 440.4 190.0M450.0 206.0C448.9 209.5 445.2 219.1 443.6 226.8C442.0 234.5 440.9 248.1 440.4 252.4M450.0 225.2C449.2 228.1 446.5 235.3 445.2 242.8C443.9 250.3 442.5 265.5 442.0 270.0M347.6 270.0L354.0 262.0L357.2 270.0L365.2 257.2L366.8 270.0L373.2 250.8L374.8 270.0M424.4 270.0L427.6 257.2L429.2 270.0M299.6 260.0C299.6 264.0 299.9 276.3 299.6 284.0C299.3 291.7 298.9 300.3 298.0 306.4C297.1 312.5 294.7 318.4 294.0 320.8M304.4 260.0C304.7 264.0 305.2 276.0 306.0 284.0C306.8 292.0 308.1 300.8 309.2 308.0C310.3 315.2 311.6 321.9 312.4 327.2C313.2 332.5 313.7 337.9 314.0 340.0M315.6 260.0L319.6 284.8L328.4 266.4L324.4 282.4M336.4 279.2L328.4 298.4L317.2 319.2L334.8 292.0L342.8 301.6L338.0 288.8L346.0 304.8L350.8 290.4L354.0 308.0L358.8 284.0M317.2 319.2C316.7 320.5 314.3 323.7 314.0 327.2C313.7 330.7 315.3 337.9 315.6 340.0M326.8 296.8C327.3 299.5 328.7 307.7 330.0 312.8C331.3 317.9 334.0 324.8 334.8 327.2M336.4 260.0L341.2 271.2L346.0 260.0L352.4 277.6L357.2 261.6L362.0 276.0L366.8 260.0L370.0 274.4L376.4 260.0"/>
<path d="M358.8 272.8L365.2 300.0L370.0 276.0L373.2 301.6L379.6 272.8L378.0 303.2L387.6 274.4L379.6 312.8L391.6 292.0L382.8 314.4M405.2 264.8C404.1 269.3 400.4 282.7 398.8 292.0C397.2 301.3 396.4 312.8 395.6 320.8C394.8 328.8 394.3 336.8 394.0 340.0M416.4 264.8C415.3 269.3 411.6 282.7 410.0 292.0C408.4 301.3 407.6 312.8 406.8 320.8C406.0 328.8 405.5 336.8 405.2 340.0M426.0 260.0C425.2 264.5 422.8 278.4 421.2 287.2C419.6 296.0 417.7 305.3 416.4 312.8C415.1 320.3 413.7 328.8 413.2 332.0M434.0 260.0C433.5 265.3 431.6 283.2 430.8 292.0C430.0 300.8 428.9 306.9 429.2 312.8C429.5 318.7 431.9 324.8 432.4 327.2M443.6 260.0C442.8 264.0 440.4 276.0 438.8 284.0C437.2 292.0 434.8 304.0 434.0 308.0M354.0 314.4C355.1 316.5 358.5 322.9 360.4 327.2C362.3 331.5 364.4 337.9 365.2 340.0M349.2 317.6C349.5 319.7 350.0 326.7 350.8 330.4C351.6 334.1 353.5 338.4 354.0 340.0M365.2 322.4C365.5 324.0 366.8 329.1 366.8 332.0C366.8 334.9 365.5 338.7 365.2 340.0M376.4 300.0C376.5 302.1 376.9 308.8 377.2 312.8C377.5 316.8 377.9 322.1 378.0 324.0M400.4 324.0L405.2 314.4L408.4 324.0L405.2 330.4L411.6 320.8M519.6 180.0C518.8 181.6 517.2 185.9 514.8 189.6C512.4 193.3 508.7 198.4 505.2 202.4C501.7 206.4 495.9 211.7 494.0 213.6"/>
<path d="M494.0 213.6C496.1 211.2 503.1 203.7 506.8 199.2C510.5 194.7 514.3 189.3 516.4 186.4C518.5 183.5 519.1 182.4 519.6 181.6M500.4 180.0C498.3 182.4 492.4 189.3 487.6 194.4C482.8 199.5 476.9 204.5 471.6 210.4C466.3 216.3 459.9 223.5 455.6 229.6C451.3 235.7 448.4 242.1 446.0 247.2C443.6 252.3 442.0 257.9 441.2 260.0M441.2 252.0C442.8 249.3 446.3 241.1 450.8 236.0C455.3 230.9 463.1 225.9 468.4 221.6C473.7 217.3 481.5 210.1 482.8 210.4C484.1 210.7 479.3 218.7 476.4 223.2C473.5 227.7 468.4 232.8 465.2 237.6C462.0 242.4 459.1 248.3 457.2 252.0C455.3 255.7 454.5 258.7 454.0 260.0M470.0 180.0C468.1 182.4 462.3 189.9 458.8 194.4C455.3 198.9 451.7 203.7 449.2 207.2C446.7 210.7 444.5 213.9 443.6 215.2M443.6 215.2C445.1 212.5 449.3 204.0 452.4 199.2C455.5 194.4 459.6 189.6 462.0 186.4C464.4 183.2 466.0 181.1 466.8 180.0M519.6 184.8C518.5 188.0 516.4 197.3 513.2 204.0C510.0 210.7 505.2 218.1 500.4 224.8C495.6 231.5 489.2 238.1 484.4 244.0C479.6 249.9 473.7 257.3 471.6 260.0M519.6 208.8C518.8 211.5 516.9 219.2 514.8 224.8C512.7 230.4 509.5 236.5 506.8 242.4C504.1 248.3 500.1 257.1 498.8 260.0M519.6 247.2C519.1 248.5 517.5 253.1 516.4 255.2C515.3 257.3 513.7 259.2 513.2 260.0M542.0 180.0C541.5 181.6 541.2 185.2 538.8 189.6C536.4 194.0 529.5 203.6 527.6 206.4M527.6 206.4C528.9 203.6 533.7 194.0 535.6 189.6C537.5 185.2 538.3 181.6 538.8 180.0M546.8 180.0C545.7 183.5 542.8 194.1 540.4 200.8C538.0 207.5 535.1 213.9 532.4 220.0C529.7 226.1 526.5 233.1 524.4 237.6C522.3 242.1 520.4 245.6 519.6 247.2M554.8 180.0C553.7 183.5 551.1 193.6 548.4 200.8C545.7 208.0 542.3 216.3 538.8 223.2C535.3 230.1 530.8 237.9 527.6 242.4C524.4 246.9 520.9 249.1 519.6 250.4"/>
<path d="M564.4 180.0C563.3 182.9 560.7 191.2 558.0 197.6C555.3 204.0 552.1 211.5 548.4 218.4C544.7 225.3 539.9 233.1 535.6 239.2C531.3 245.3 525.5 251.7 522.8 255.2C520.1 258.7 520.1 259.2 519.6 260.0M444.4 250.0C443.3 253.5 439.9 262.8 438.0 270.8C436.1 278.8 434.3 290.8 433.2 298.0C432.1 305.2 431.9 311.3 431.6 314.0M457.2 250.0C455.3 254.5 449.2 268.4 446.0 277.2C442.8 286.0 439.9 297.2 438.0 302.8C436.1 308.4 435.3 309.5 434.8 310.8M471.6 250.0C469.2 254.0 461.5 266.0 457.2 274.0C452.9 282.0 448.9 291.3 446.0 298.0C443.1 304.7 440.7 311.3 439.6 314.0M502.0 250.0C500.7 252.7 497.2 260.7 494.0 266.0C490.8 271.3 487.2 277.1 482.8 282.0C478.4 286.9 470.1 293.3 467.6 295.6M467.6 295.6C470.1 294.1 478.9 289.5 482.8 286.8C486.7 284.1 489.5 280.8 490.8 279.6M522.8 250.0C521.2 252.1 516.5 258.8 513.2 262.8C509.9 266.8 504.5 272.1 502.8 274.0M502.8 274.0C504.3 271.9 508.9 265.2 511.6 261.2C514.3 257.2 517.6 251.9 518.8 250.0M519.6 254.8C518.0 257.5 513.7 266.0 510.0 270.8C506.3 275.6 500.4 280.7 497.2 283.6C494.0 286.5 491.9 287.6 490.8 288.4M490.8 279.6L485.2 293.2L489.2 287.6L485.2 284.4L490.8 279.6M489.2 287.6C490.8 288.5 496.1 290.4 498.8 293.2C501.5 296.0 503.7 300.4 505.2 304.4C506.7 308.4 507.6 312.9 507.6 317.2C507.6 321.5 505.6 327.9 505.2 330.0M485.2 284.4C486.1 286.7 488.5 293.6 490.8 298.0C493.1 302.4 496.7 305.5 498.8 310.8C500.9 316.1 502.8 326.8 503.6 330.0"/>
</g></svg>
<svg class="a" style="left:836px;top:396px" width="30" height="44" viewBox="0 0 30 44"><path d="M12 4 C16 4 19 9 19 13 C19 17 17 19 15 19 C11 18 6 13 6 9 C6 6 9 4 12 4Z" fill="#cfd0d0" opacity="0.95"/><path d="M18 26 L22 25 L23 30 L19 31Z M18 33 L24 32 L24 39 L19 39Z" fill="#e4e4e4" opacity="0.85"/></svg>
<svg class="a" style="left:852px;top:446px" width="16" height="22" viewBox="0 0 16 22"><path d="M1 3 L8 2 L8 6 L5 7 L5 18 L2 18 L2 7 L1 7Z M10 4 L12 4 L12 10 L10 10Z" fill="#ececec" opacity="0.85"/></svg>
<div class="t sans" style="left:766px;top:463px;font-size:15px;line-height:18px;height:18px;font-weight:bold;color:#ececec;opacity:.8;letter-spacing:1px;">ju</div>
<div class="t sans" style="left:838px;top:462px;font-size:16px;line-height:18px;height:17px;overflow:hidden;font-weight:bold;color:#f4f4f4;opacity:.92;letter-spacing:0.5px;">.bai</div>
<div class="t sans" style="left:873px;top:462px;font-size:16px;line-height:18px;height:17px;overflow:hidden;font-weight:bold;color:#f4f4f4;opacity:.92;letter-spacing:0.5px;">ic</div>
<div class="t sans" style="left:931px;top:462px;font-size:16px;line-height:18px;height:17px;overflow:hidden;font-weight:bold;color:#f4f4f4;opacity:.85;letter-spacing:0.5px;">ol</div>

<div class="a" style="left:870px;top:485px;width:130px;height:21px;background:#f3f5f8;border-radius:4px 0 0 0;border-top:1px solid #c9d2dc;box-sizing:border-box;"></div>
<div class="a" style="left:871px;top:486px;width:22px;height:20px;background:#3bb135;border-radius:4px;"></div>
<div class="t sans" style="left:875px;top:485px;font-size:19px;line-height:20px;height:20px;font-weight:bold;color:#fff;font-style:italic;">S</div>
<div class="t sans" style="left:896px;top:488px;font-size:13px;line-height:15px;height:15px;font-weight:bold;color:#2c2c34;">英</div>
<svg class="a" style="left:912px;top:487px" width="88" height="18" viewBox="0 0 88 18"><path d="M9 2 C13 4 14 11 7 14 C3 15 2 13 2 13 C7 13 10 8 9 2Z" fill="#3a3a52"/><circle cx="23" cy="6" r="1.600" fill="#3a3a52"/><path d="M27 9 C29 9 29 12 26.500 13.500 C27.500 12 27 11 26 11 C25 10 26 9 27 9Z" fill="#3a3a52"/><rect x="36.500" y="4.500" width="13" height="9" rx="1.500" fill="none" stroke="#3a3a52" stroke-width="1.600"/><path d="M39 7.500 h8 M39 10.500 h8" stroke="#3a3a52" stroke-width="1.400" stroke-dasharray="1.500 1"/><circle cx="62" cy="6" r="2.600" fill="#c3d0d8"/><path d="M57 15 C57 10 67 10 67 15Z" fill="#c3d0d8"/><path d="M74.500 15.500 L80 9.500 C79 7 80.500 4 83.500 3.500 L82 6 L83.500 7.500 L86 6.500 C86 9 83.500 11 81.500 10.500 L76 16.500Z" fill="#3a3a52"/></svg>

</body></html>
